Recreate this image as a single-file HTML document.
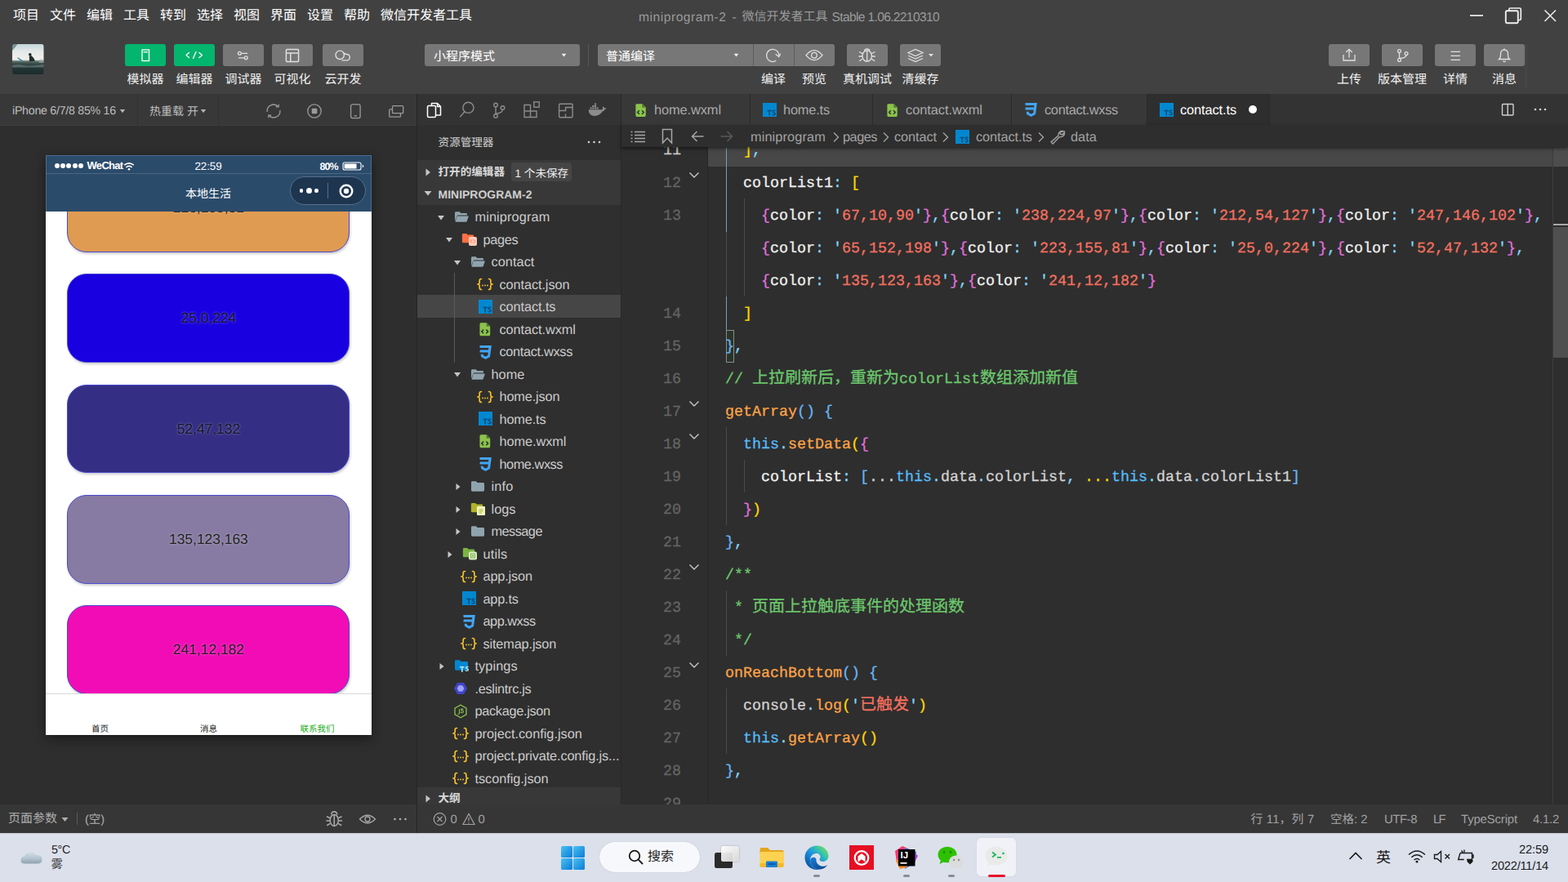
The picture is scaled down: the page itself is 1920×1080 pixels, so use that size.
<!DOCTYPE html><html><head><meta charset="utf-8"><title>miniprogram-2</title><style>html,body{margin:0;padding:0}body{width:1920px;height:1080px;overflow:hidden;position:relative;background:#2e2e2e;font-family:"Liberation Sans",sans-serif;text-rendering:geometricPrecision;-webkit-font-smoothing:antialiased}div{box-sizing:border-box}svg{display:inline-block}.cj{display:block;white-space:nowrap;font-family:"Liberation Sans","Noto Sans CJK SC",sans-serif}.ci{font-family:"Liberation Sans","Noto Sans CJK SC",sans-serif}.cm{font-family:"Liberation Mono","Noto Sans CJK SC",monospace;font-size:20px}</style></head><body><div style="position:absolute;left:0px;top:0px;width:1920px;height:115px;background:#414141;"></div><div style="position:absolute;left:16.00px;top:11.92px;height:16.00px;line-height:0;font-size:0;white-space:nowrap"><span class="cj" style="font-size:16px;line-height:16px;color:#ffffff">项目</span></div><div style="position:absolute;left:61.00px;top:11.92px;height:16.00px;line-height:0;font-size:0;white-space:nowrap"><span class="cj" style="font-size:16px;line-height:16px;color:#ffffff">文件</span></div><div style="position:absolute;left:106.00px;top:11.92px;height:16.00px;line-height:0;font-size:0;white-space:nowrap"><span class="cj" style="font-size:16px;line-height:16px;color:#ffffff">编辑</span></div><div style="position:absolute;left:151.00px;top:11.92px;height:16.00px;line-height:0;font-size:0;white-space:nowrap"><span class="cj" style="font-size:16px;line-height:16px;color:#ffffff">工具</span></div><div style="position:absolute;left:196.00px;top:11.92px;height:16.00px;line-height:0;font-size:0;white-space:nowrap"><span class="cj" style="font-size:16px;line-height:16px;color:#ffffff">转到</span></div><div style="position:absolute;left:241.00px;top:11.92px;height:16.00px;line-height:0;font-size:0;white-space:nowrap"><span class="cj" style="font-size:16px;line-height:16px;color:#ffffff">选择</span></div><div style="position:absolute;left:286.00px;top:11.92px;height:16.00px;line-height:0;font-size:0;white-space:nowrap"><span class="cj" style="font-size:16px;line-height:16px;color:#ffffff">视图</span></div><div style="position:absolute;left:331.00px;top:11.92px;height:16.00px;line-height:0;font-size:0;white-space:nowrap"><span class="cj" style="font-size:16px;line-height:16px;color:#ffffff">界面</span></div><div style="position:absolute;left:376.00px;top:11.92px;height:16.00px;line-height:0;font-size:0;white-space:nowrap"><span class="cj" style="font-size:16px;line-height:16px;color:#ffffff">设置</span></div><div style="position:absolute;left:421.00px;top:11.92px;height:16.00px;line-height:0;font-size:0;white-space:nowrap"><span class="cj" style="font-size:16px;line-height:16px;color:#ffffff">帮助</span></div><div style="position:absolute;left:466.00px;top:11.92px;height:16.00px;line-height:0;font-size:0;white-space:nowrap"><span class="cj" style="font-size:16px;line-height:16px;color:#ffffff">微信开发者工具</span></div><div style="position:absolute;left:782.00px;top:10.59px;height:22px;line-height:22px;font-size:15.60px;color:#9a9a9a;font-family:'Liberation Sans',sans-serif;white-space:pre;letter-spacing:0.533px;">miniprogram-2</div><div style="position:absolute;left:896.50px;top:10.59px;height:22px;line-height:22px;font-size:15.60px;color:#9a9a9a;font-family:'Liberation Sans',sans-serif;white-space:pre;">-</div><div style="position:absolute;left:908.50px;top:13.10px;height:15.00px;line-height:0;font-size:0;white-space:nowrap"><span class="cj" style="font-size:15px;line-height:15px;color:#9a9a9a">微信开发者工具</span></div><div style="position:absolute;left:1018.50px;top:10.59px;height:22px;line-height:22px;font-size:15.60px;color:#9a9a9a;font-family:'Liberation Sans',sans-serif;white-space:pre;letter-spacing:-0.658px;">Stable 1.06.2210310</div><svg style="position:absolute;left:1790px;top:0px;" width="130" height="40" viewBox="0 0 130 40"><g stroke="#f0f0f0" stroke-width="1.7" fill="none"><path d="M10 19h16"/><rect x="53.8" y="13.300" width="15" height="15" rx="1.500" stroke-width="1.900"/><path d="M57.800 13v-1.500q0-1.500 1.500-1.500h11.500q1.500 0 1.500 1.500v11.500q0 1.500-1.500 1.500h-1.500" stroke-width="1.700"/><path d="M101.500 12.500l13.500 13.500M115 12.500l-13.500 13.500" stroke-width="1.500"/></g></svg><svg style="position:absolute;left:15px;top:54px;border-radius:3.500px" width="38.500" height="37" viewBox="0 0 38.500 37"><defs><linearGradient id="avg" x1="0" y1="0" x2="0" y2="1"><stop offset="0" stop-color="#c3d6d9"/><stop offset=".25" stop-color="#e4e9e8"/><stop offset=".52" stop-color="#f3efea"/><stop offset=".56" stop-color="#6d7d7a"/><stop offset=".62" stop-color="#41524f"/><stop offset=".74" stop-color="#26373a"/><stop offset="1" stop-color="#1b2b28"/></linearGradient></defs><rect width="38.500" height="37" fill="url(#avg)"/><path d="M0 0h6.500q-3 4-6.500 8z" fill="#5d7d80" opacity=".8"/><path d="M0 26q8-1.500 14 0t24.500-1v3.500h-38.500z" fill="#7e908d" opacity=".55"/><path d="M6 17l1-.8 6.500 4.300-1.500 1z" fill="#2f8f9f"/><circle cx="21.800" cy="12.800" r="1.800" fill="#1d2a2a"/><path d="M20.800 14.500l2.500-.5q3.200 2.300 4.700 6.800l-7 .500z" fill="#1f2d2d"/><path d="M33 19.500q2-2 4-.5l1.500 1v3h-6z" fill="#9fb0ae" opacity=".6"/></svg><div style="position:absolute;left:153px;top:54px;width:50px;height:27px;background:#04b56e;border-radius:3px;"></div><svg style="position:absolute;left:153px;top:54px;" width="50" height="27" viewBox="0 0 50 27"><rect x="21" y="7" width="8.5" height="13.5" stroke="#ffffff" fill="none" stroke-width="1.3"/><path d="M22.5 9.8h5.5" stroke="#ffffff" fill="none" stroke-width="1.3"/></svg><div style="position:absolute;left:213px;top:54px;width:50px;height:27px;background:#04b56e;border-radius:3px;"></div><svg style="position:absolute;left:213px;top:54px;" width="50" height="27" viewBox="0 0 50 27"><path d="M18.5 10.5l-3.5 3 3.5 3M31 10.5l3.5 3-3.5 3M27 9.5l-3.5 8" stroke="#ffffff" fill="none" stroke-width="1.3" stroke-linecap="round" stroke-linejoin="round"/></svg><div style="position:absolute;left:273px;top:54px;width:50px;height:27px;background:#777777;border-radius:3px;"></div><svg style="position:absolute;left:273px;top:54px;" width="50" height="27" viewBox="0 0 50 27"><g stroke="#e0e0e0" fill="none" stroke-width="1.3"><circle cx="20.400" cy="11.300" r="1.900"/><path d="M22.500 11.300h7.500M19 16.800h7.300"/><circle cx="28.300" cy="16.800" r="1.900"/></g></svg><div style="position:absolute;left:333px;top:54px;width:50px;height:27px;background:#777777;border-radius:3px;"></div><svg style="position:absolute;left:333px;top:54px;" width="50" height="27" viewBox="0 0 50 27"><g stroke="#e0e0e0" fill="none" stroke-width="1.3"><rect x="17.400" y="6.600" width="15.200" height="14.900" rx="1.200" stroke-width="1.500"/><path d="M17.400 11h15.200M22.750 11v10.500" stroke-width="1.500"/></g></svg><div style="position:absolute;left:395px;top:54px;width:50px;height:27px;background:#777777;border-radius:3px;"></div><svg style="position:absolute;left:395px;top:54px;" width="50" height="27" viewBox="0 0 50 27"><g stroke="#e0e0e0" fill="none" stroke-width="1.3"><circle cx="21.200" cy="13.300" r="5.200" stroke-width="1.400"/><path d="M25.300 10.600Q27.500 12.500 29.600 12.500A3.700 3.700 0 0 1 29.600 19.900L23.500 19.900" stroke-width="1.400"/></g></svg><div style="position:absolute;left:155.50px;top:89.80px;height:15.00px;line-height:0;font-size:0;white-space:nowrap"><span class="cj" style="font-size:15px;line-height:15px;color:#f0f0f0">模拟器</span></div><div style="position:absolute;left:215.50px;top:89.80px;height:15.00px;line-height:0;font-size:0;white-space:nowrap"><span class="cj" style="font-size:15px;line-height:15px;color:#f0f0f0">编辑器</span></div><div style="position:absolute;left:275.50px;top:89.80px;height:15.00px;line-height:0;font-size:0;white-space:nowrap"><span class="cj" style="font-size:15px;line-height:15px;color:#f0f0f0">调试器</span></div><div style="position:absolute;left:335.50px;top:89.80px;height:15.00px;line-height:0;font-size:0;white-space:nowrap"><span class="cj" style="font-size:15px;line-height:15px;color:#f0f0f0">可视化</span></div><div style="position:absolute;left:397.50px;top:89.80px;height:15.00px;line-height:0;font-size:0;white-space:nowrap"><span class="cj" style="font-size:15px;line-height:15px;color:#f0f0f0">云开发</span></div><div style="position:absolute;left:520px;top:54px;width:190px;height:27px;background:#777777;border-radius:3px;"></div><div style="position:absolute;left:531.00px;top:61.50px;height:15.00px;line-height:0;font-size:0;white-space:nowrap"><span class="cj" style="font-size:15px;line-height:15px;color:#ffffff">小程序模式</span></div><svg style="position:absolute;left:685px;top:64px;" width="10" height="8" viewBox="0 0 10 8"><path d="M2.700 1.800h5.600l-2.800 3.700z" fill="#f0f0f0"/></svg><div style="position:absolute;left:720px;top:54px;width:1px;height:27px;background:#565656;"></div><div style="position:absolute;left:732px;top:54px;width:290px;height:27px;background:#777777;border-radius:3px;"></div><div style="position:absolute;left:742.00px;top:61.50px;height:15.00px;line-height:0;font-size:0;white-space:nowrap"><span class="cj" style="font-size:15px;line-height:15px;color:#ffffff">普通编译</span></div><svg style="position:absolute;left:896px;top:64px;" width="10" height="8" viewBox="0 0 10 8"><path d="M2.700 1.800h5.600l-2.800 3.700z" fill="#f0f0f0"/></svg><div style="position:absolute;left:922px;top:54px;width:1px;height:27px;background:#5c5c5c;"></div><div style="position:absolute;left:972px;top:54px;width:1px;height:27px;background:#5c5c5c;"></div><svg style="position:absolute;left:922px;top:54px;" width="50" height="27" viewBox="0 0 50 27"><g stroke="#e0e0e0" fill="none" stroke-width="1.3" stroke-width="1.4"><path d="M28.300 20.300A7.600 7.600 0 1 1 31.700 15"/><path d="M27.700 12.300l4 3.300 2.100-4" fill="none"/></g></svg><svg style="position:absolute;left:972px;top:54px;" width="50" height="27" viewBox="0 0 50 27"><g stroke="#e0e0e0" fill="none" stroke-width="1.3"><path d="M15 13.700q10-12 20 0q-10 12-20 0z"/><circle cx="25" cy="13.700" r="3.300"/></g></svg><div style="position:absolute;left:1037px;top:54px;width:50px;height:27px;background:#777777;border-radius:3px;"></div><svg style="position:absolute;left:1037px;top:54px;" width="50" height="27" viewBox="0 0 50 27"><g stroke="#e0e0e0" fill="none" stroke-width="1.3"><ellipse cx="24.700" cy="14.500" rx="5.700" ry="6.700"/><path d="M24.700 8v13M21.500 8.300q.5-2.300 3.200-2.300t3.200 2.300M19.300 11.800l-4.300-2.300M19 15h-4.500M19.400 18l-4.200 2.800M30.100 11.800l4.300-2.300M30.400 15h4.500M30 18l4.200 2.800"/></g></svg><div style="position:absolute;left:1102px;top:54px;width:50px;height:27px;background:#777777;border-radius:3px;"></div><svg style="position:absolute;left:1102px;top:54px;" width="50" height="27" viewBox="0 0 50 27"><g stroke="#e0e0e0" fill="none" stroke-width="1.3"><path d="M10 10.500l9-4 9 4-9 4z"/><path d="M10 14l9 4 9-4M10 17.500l9 4 9-4"/></g><path d="M35 12h6l-3 3.200z" fill="#e6e6e6"/></svg><div style="position:absolute;left:932.00px;top:89.80px;height:15.00px;line-height:0;font-size:0;white-space:nowrap"><span class="cj" style="font-size:15px;line-height:15px;color:#f0f0f0">编译</span></div><div style="position:absolute;left:982.00px;top:89.80px;height:15.00px;line-height:0;font-size:0;white-space:nowrap"><span class="cj" style="font-size:15px;line-height:15px;color:#f0f0f0">预览</span></div><div style="position:absolute;left:1032.00px;top:89.80px;height:15.00px;line-height:0;font-size:0;white-space:nowrap"><span class="cj" style="font-size:15px;line-height:15px;color:#f0f0f0">真机调试</span></div><div style="position:absolute;left:1104.50px;top:89.80px;height:15.00px;line-height:0;font-size:0;white-space:nowrap"><span class="cj" style="font-size:15px;line-height:15px;color:#f0f0f0">清缓存</span></div><div style="position:absolute;left:1627px;top:54px;width:50px;height:27px;background:#777777;border-radius:3px;"></div><svg style="position:absolute;left:1627px;top:54px;" width="50" height="27" viewBox="0 0 50 27"><g stroke="#e0e0e0" fill="none" stroke-width="1.3"><path d="M18 13v7h14v-7M25 16.500V6.500M21.300 10l3.700-3.700 3.700 3.700"/></g></svg><div style="position:absolute;left:1692px;top:54px;width:50px;height:27px;background:#777777;border-radius:3px;"></div><svg style="position:absolute;left:1692px;top:54px;" width="50" height="27" viewBox="0 0 50 27"><g stroke="#e0e0e0" fill="none" stroke-width="1.3"><circle cx="21.5" cy="8.5" r="1.9"/><circle cx="21.5" cy="19.5" r="1.9"/><circle cx="30" cy="11.5" r="1.9"/><path d="M21.5 10.4v7.2M30 13.4q0 3.6-8.5 4"/></g></svg><div style="position:absolute;left:1757px;top:54px;width:50px;height:27px;background:#777777;border-radius:3px;"></div><svg style="position:absolute;left:1757px;top:54px;" width="50" height="27" viewBox="0 0 50 27"><g stroke="#e0e0e0" fill="none" stroke-width="1.3" stroke-width="1.5"><path d="M19.500 9.300h11.500M19.500 14.300h11.500M19.500 19.300h11.500"/></g></svg><div style="position:absolute;left:1817px;top:54px;width:50px;height:27px;background:#777777;border-radius:3px;"></div><svg style="position:absolute;left:1817px;top:54px;" width="50" height="27" viewBox="0 0 50 27"><g stroke="#e0e0e0" fill="none" stroke-width="1.3"><path d="M18.5 18.5h13q-2-1.5-2-4.500v-2.500a4.5 4.5 0 0 0-9 0v2.500q0 3-2 4.500zM23.5 20.5a1.6 1.6 0 0 0 3 0M25 7V5.600"/></g></svg><div style="position:absolute;left:1867px;top:54px;width:3px;height:54px;background:#464646;"></div><div style="position:absolute;left:1637.00px;top:89.80px;height:15.00px;line-height:0;font-size:0;white-space:nowrap"><span class="cj" style="font-size:15px;line-height:15px;color:#f0f0f0">上传</span></div><div style="position:absolute;left:1687.00px;top:89.80px;height:15.00px;line-height:0;font-size:0;white-space:nowrap"><span class="cj" style="font-size:15px;line-height:15px;color:#f0f0f0">版本管理</span></div><div style="position:absolute;left:1767.00px;top:89.80px;height:15.00px;line-height:0;font-size:0;white-space:nowrap"><span class="cj" style="font-size:15px;line-height:15px;color:#f0f0f0">详情</span></div><div style="position:absolute;left:1827.00px;top:89.80px;height:15.00px;line-height:0;font-size:0;white-space:nowrap"><span class="cj" style="font-size:15px;line-height:15px;color:#f0f0f0">消息</span></div><div style="position:absolute;left:0px;top:115px;width:510px;height:39px;background:#383838;"></div><div style="position:absolute;left:0px;top:153px;width:510px;height:1px;background:#3d3d3d;"></div><div style="position:absolute;left:168px;top:115px;width:1px;height:39px;background:#323232;"></div><div style="position:absolute;left:267px;top:115px;width:1px;height:39px;background:#323232;"></div><div style="position:absolute;left:15.00px;top:126.08px;height:20px;line-height:20px;font-size:14.20px;color:#bdbdbd;font-family:'Liberation Sans',sans-serif;white-space:pre;letter-spacing:-0.255px;">iPhone 6/7/8 85% 16</div><svg style="position:absolute;left:145.5px;top:133px;" width="8" height="6" viewBox="0 0 8 6"><path d="M0.800 1h6.400l-3.200 4.300z" fill="#b4b4b4"/></svg><div style="position:absolute;left:183.00px;top:126.15px;height:20px;line-height:20px;font-size:14.00px;color:#bdbdbd;font-family:'Liberation Sans',sans-serif;white-space:pre;"><span class="ci">热重载 开</span></div><svg style="position:absolute;left:245px;top:133px;" width="8" height="6" viewBox="0 0 8 6"><path d="M0.800 1h6.400l-3.200 4.300z" fill="#b4b4b4"/></svg><svg style="position:absolute;left:324.8px;top:126.1px;" width="20" height="20" viewBox="0 0 20 20"><g stroke="#9a9a9a" fill="none" stroke-width="1.3"><path d="M2.200 11a7.800 7.800 0 0 1 13.600-6.200M17.800 9a7.800 7.800 0 0 1-13.600 6.200"/><path d="M16.300 1.800l-.300 3.300-3.200-.500M3.700 18.200l.300-3.300 3.200.500"/></g></svg><svg style="position:absolute;left:375.1px;top:126.1px;" width="20" height="20" viewBox="0 0 20 20"><g stroke="#9a9a9a" fill="none" stroke-width="1.3"><circle cx="10" cy="10" r="8.200"/></g><rect x="6.700" y="6.700" width="6.600" height="6.600" rx="1" fill="#9a9a9a"/></svg><svg style="position:absolute;left:425px;top:126px;" width="20" height="20" viewBox="0 0 20 20"><g stroke="#9a9a9a" fill="none" stroke-width="1.3"><rect x="4.600" y="1.800" width="11.500" height="16.800" rx="2"/><path d="M8.500 16h3.700"/></g></svg><svg style="position:absolute;left:474px;top:126px;" width="22" height="20" viewBox="0 0 22 20"><g stroke="#9a9a9a" fill="none" stroke-width="1.3"><rect x="6.500" y="3.600" width="13.200" height="9" rx="1.200"/><path d="M6.500 7.800h-2.600q-1.200 0-1.200 1.200v7q0 1.200 1.200 1.200h11.400q1.200 0 1.200-1.200v-3.400"/></g></svg><div style="position:absolute;left:510px;top:115px;width:1px;height:905px;background:#252525;"></div><div style="position:absolute;left:511px;top:115px;width:249px;height:38px;background:#333333;"></div><svg style="position:absolute;left:519.5px;top:123.7px;" width="24" height="24" viewBox="0 0 24 24"><g stroke="#ffffff" fill="none" stroke-width="1.5" stroke-linejoin="round"><path d="M8.500 5.500v-3h7l4 4v10.500h-6"/><path d="M15.500 2.500v4h4"/><rect x="3.500" y="5.500" width="10" height="14" rx="1.500"/></g></svg><svg style="position:absolute;left:559px;top:122px;" width="24" height="24" viewBox="0 0 24 24"><g stroke="#8c8c8c" fill="none" stroke-width="1.400"><circle cx="14.400" cy="9.800" r="6.600"/><path d="M10 14.800L4.200 21.300"/></g></svg><svg style="position:absolute;left:599.3px;top:122.7px;" width="24" height="24" viewBox="0 0 24 24"><g stroke="#8c8c8c" fill="none" stroke-width="1.400"><circle cx="8" cy="5.500" r="2.300"/><circle cx="8" cy="19" r="2.300"/><circle cx="16.500" cy="9" r="2.300"/><path d="M8 7.800v8.900M16.500 11.300q0 4-8.500 5"/></g></svg><svg style="position:absolute;left:639px;top:122px;" width="24" height="24" viewBox="0 0 24 24"><g stroke="#8c8c8c" fill="none" stroke-width="1.400"><path d="M3 6.500h7.500v7.500h7.500v7.500h-15zM3 14h7.500v7.500"/><rect x="14.800" y="2.800" width="6.400" height="6.400"/></g></svg><svg style="position:absolute;left:679px;top:122px;" width="24" height="24" viewBox="0 0 24 24"><g stroke="#8c8c8c" fill="none" stroke-width="1.400"><rect x="5.600" y="5.200" width="16.500" height="16.500" rx="1.200"/><path d="M5.600 13.500h8v-4h8.500M13.500 21.700v-4.200"/></g></svg><svg style="position:absolute;left:718.3px;top:123.5px;" width="26" height="24" viewBox="0 0 26 24"><path d="M2 12.500h17.500q2.500-.3 3-2.500q1.800-.2 2.300-1.200q-1.300-.9-2.600-.300q-.4-1.700-1.700-2.300q-1.200 1.600-.300 3.400q-.8.700-2 .700h-15.500q-.2 4.500 3.400 6.700q3 1.500 6.800.600q4.700-1.400 6.600-5.100z" fill="#8c8c8c"/><g fill="#8c8c8c"><rect x="4.500" y="7.500" width="2.200" height="2"/><rect x="7.200" y="7.500" width="2.200" height="2"/><rect x="9.900" y="7.500" width="2.200" height="2"/><rect x="12.600" y="7.500" width="2.200" height="2"/><rect x="7.200" y="5" width="2.200" height="2"/><rect x="9.900" y="5" width="2.200" height="2"/><rect x="9.900" y="2.500" width="2.200" height="2"/></g></svg><div style="position:absolute;left:760px;top:115px;width:1px;height:870px;background:#282828;"></div><div style="position:absolute;left:761px;top:115px;width:1159px;height:38px;background:#333333;"></div><div style="position:absolute;left:761px;top:115px;width:157px;height:38px;background:#383838;"></div><div style="position:absolute;left:918px;top:115px;width:150px;height:38px;background:#383838;"></div><div style="position:absolute;left:1068px;top:115px;width:170px;height:38px;background:#383838;"></div><div style="position:absolute;left:1238px;top:115px;width:166px;height:38px;background:#383838;"></div><div style="position:absolute;left:918px;top:115px;width:1px;height:38px;background:#2a2a2a;"></div><div style="position:absolute;left:1068px;top:115px;width:1px;height:38px;background:#2a2a2a;"></div><div style="position:absolute;left:1238px;top:115px;width:1px;height:38px;background:#2a2a2a;"></div><div style="position:absolute;left:1404px;top:115px;width:1px;height:38px;background:#2a2a2a;"></div><div style="position:absolute;left:1405px;top:115px;width:149px;height:38px;background:#2e2e2e;"></div><div style="position:absolute;left:1554px;top:115px;width:1px;height:38px;background:#2a2a2a;"></div><div style="position:absolute;left:1404px;top:115px;width:1px;height:38px;background:#2a2a2a;"></div><svg style="position:absolute;left:774.5px;top:125.5px;" width="18" height="18" viewBox="0 0 16 16"><path d="M3 2.300q0-1.300 1.300-1.300h6l3.700 3.700v9q0 1.300-1.300 1.300h-8.400q-1.300 0-1.300-1.300z" fill="#8bc34a"/><path d="M10 1v3.300q0 .700.700.700h3.300z" fill="#2e2e2e" opacity=".55"/><path d="M7 8.300l-2 2 2 2M9.800 8.300l2 2-2 2" stroke="#263238" stroke-width="1.300" fill="none"/></svg><div style="position:absolute;left:801.00px;top:123.82px;height:23px;line-height:23px;font-size:16.40px;color:#a9a9a9;font-family:'Liberation Sans',sans-serif;white-space:pre;letter-spacing:-0.103px;">home.wxml</div><svg style="position:absolute;left:934px;top:125.8px;" width="17" height="17" viewBox="0 0 16 16"><rect x="0" y="0" width="16" height="16" fill="#0288d1"/><path d="M5.200 8.300h5v1.300h-1.800v5.200h-1.400v-5.200h-1.800z" fill="#0a4d78"/><path d="M14.600 9.700q-.700-.500-1.500-.500t-.8.500q0 .400 1.100.900q1.600.700 1.600 2.100q0 2-2.300 2q-1.200 0-2-.600v-1.400q.9.700 1.900.700q.9 0 .9-.600q0-.500-1.200-1q-1.500-.700-1.500-2q0-1.800 2.200-1.800q1 0 1.600.300z" fill="#0a4d78"/></svg><div style="position:absolute;left:959.00px;top:123.82px;height:23px;line-height:23px;font-size:16.40px;color:#a9a9a9;font-family:'Liberation Sans',sans-serif;white-space:pre;letter-spacing:-0.191px;">home.ts</div><svg style="position:absolute;left:1082.5px;top:125.5px;" width="18" height="18" viewBox="0 0 16 16"><path d="M3 2.300q0-1.300 1.300-1.300h6l3.700 3.700v9q0 1.300-1.300 1.300h-8.400q-1.300 0-1.300-1.300z" fill="#8bc34a"/><path d="M10 1v3.300q0 .700.700.700h3.300z" fill="#2e2e2e" opacity=".55"/><path d="M7 8.300l-2 2 2 2M9.800 8.300l2 2-2 2" stroke="#263238" stroke-width="1.300" fill="none"/></svg><div style="position:absolute;left:1109.00px;top:123.82px;height:23px;line-height:23px;font-size:16.40px;color:#a9a9a9;font-family:'Liberation Sans',sans-serif;white-space:pre;letter-spacing:-0.065px;">contact.wxml</div><svg style="position:absolute;left:1252px;top:125px;" width="19" height="19" viewBox="0 0 17 17"><path d="M3 1h13l-1.700 12.500-4.800 2.500-4.900-2.500-.4-3h2.700l.2 1.300 2.400 1.100 2.400-1.100.4-3.300h-9.300l.4-2.600h9.200l.2-2.300h-9.500z" fill="#42a5f5"/></svg><div style="position:absolute;left:1279.00px;top:123.82px;height:23px;line-height:23px;font-size:16.40px;color:#a9a9a9;font-family:'Liberation Sans',sans-serif;white-space:pre;letter-spacing:-0.323px;">contact.wxss</div><svg style="position:absolute;left:1420px;top:125.8px;" width="17" height="17" viewBox="0 0 16 16"><rect x="0" y="0" width="16" height="16" fill="#0288d1"/><path d="M5.200 8.300h5v1.300h-1.800v5.200h-1.400v-5.200h-1.800z" fill="#0a4d78"/><path d="M14.600 9.700q-.700-.500-1.500-.500t-.8.500q0 .400 1.100.900q1.600.700 1.600 2.100q0 2-2.300 2q-1.200 0-2-.600v-1.400q.9.700 1.900.700q.9 0 .9-.600q0-.500-1.200-1q-1.500-.700-1.500-2q0-1.800 2.200-1.800q1 0 1.600.300z" fill="#0a4d78"/></svg><div style="position:absolute;left:1445.00px;top:123.82px;height:23px;line-height:23px;font-size:16.40px;color:#ffffff;font-family:'Liberation Sans',sans-serif;white-space:pre;letter-spacing:-0.119px;">contact.ts</div><div style="position:absolute;left:1528.5px;top:129px;width:10px;height:10px;background:#ffffff;border-radius:50%;"></div><svg style="position:absolute;left:1836px;top:124px;" width="20" height="20" viewBox="0 0 20 20"><g stroke="#d0d0d0" stroke-width="1.400" fill="none"><rect x="3.500" y="3.500" width="13.500" height="13.500" rx="1"/><path d="M10.200 3.500v13.500"/></g></svg><svg style="position:absolute;left:1876px;top:124px;" width="20" height="20" viewBox="0 0 20 20"><g fill="#d0d0d0"><circle cx="4" cy="10" r="1.300"/><circle cx="10" cy="10" r="1.300"/><circle cx="16" cy="10" r="1.300"/></g></svg><div style="position:absolute;left:56px;top:190.4px;width:399px;height:709.6px;background:#ffffff;box-shadow:0 4px 14px rgba(0,0,0,.45);"></div><div style="position:absolute;left:56px;top:258.500px;width:399px;height:591px;overflow:hidden;background:#fff"><div style="position:absolute;left:26.400px;top:-58.35px;width:346px;height:108.7px;border-radius:24px;background:#df9b51;border:1px solid #4a4ad0;box-shadow:1px 2px 3px rgba(0,0,0,.2);font-size:17.4px;line-height:107.4px;text-align:center;color:#2a2a2a;text-shadow:0 0 3px rgba(255,255,255,.45)">223,155,81</div><div style="position:absolute;left:26.400px;top:76.90px;width:346px;height:108.7px;border-radius:24px;background:#1900e0;border:1px solid #4a4ad0;box-shadow:1px 2px 3px rgba(0,0,0,.2);font-size:17.4px;line-height:107.4px;text-align:center;color:#12122a;text-shadow:0 0 3px rgba(255,255,255,.45)">25,0,224</div><div style="position:absolute;left:26.400px;top:212.15px;width:346px;height:108.7px;border-radius:24px;background:#342f84;border:1px solid #4a4ad0;box-shadow:1px 2px 3px rgba(0,0,0,.2);font-size:17.4px;line-height:107.4px;text-align:center;color:#15152a;text-shadow:0 0 3px rgba(255,255,255,.45)">52,47,132</div><div style="position:absolute;left:26.400px;top:347.40px;width:346px;height:108.7px;border-radius:24px;background:#877ba3;border:1px solid #4a4ad0;box-shadow:1px 2px 3px rgba(0,0,0,.2);font-size:17.4px;line-height:107.4px;text-align:center;color:#222222;text-shadow:0 0 3px rgba(255,255,255,.45)">135,123,163</div><div style="position:absolute;left:26.400px;top:482.65px;width:346px;height:108.7px;border-radius:24px;background:#f10cb6;border:1px solid #4a4ad0;box-shadow:1px 2px 3px rgba(0,0,0,.2);font-size:17.4px;line-height:107.4px;text-align:center;color:#2a1a26;text-shadow:0 0 3px rgba(255,255,255,.45)">241,12,182</div></div><div style="position:absolute;left:56px;top:190.4px;width:399px;height:68.2px;background:#2b4b6b;"></div><div style="position:absolute;left:56px;top:212.2px;width:399px;height:1px;background:#4a6785;"></div><div style="position:absolute;left:56px;top:190.4px;width:399px;height:68.2px;border:1px solid rgba(140,170,200,.35);border-bottom:none"></div><div style="position:absolute;left:67px;top:200.3px;width:6px;height:6px;background:#ffffff;border-radius:50%;"></div><div style="position:absolute;left:74.2px;top:200.3px;width:6px;height:6px;background:#ffffff;border-radius:50%;"></div><div style="position:absolute;left:81.4px;top:200.3px;width:6px;height:6px;background:#ffffff;border-radius:50%;"></div><div style="position:absolute;left:88.6px;top:200.3px;width:6px;height:6px;background:#ffffff;border-radius:50%;"></div><div style="position:absolute;left:95.8px;top:200.3px;width:6px;height:6px;background:#ffffff;border-radius:50%;"></div><div style="position:absolute;left:106.50px;top:194.20px;height:18px;line-height:18px;font-size:13.00px;color:#ffffff;font-family:'Liberation Sans',sans-serif;white-space:pre;font-weight:bold;letter-spacing:-0.692px;">WeChat</div><svg style="position:absolute;left:150.5px;top:197.5px;" width="14" height="11" viewBox="0 0 14 11"><g fill="none" stroke="#fff" stroke-width="1.700"><path d="M1.200 4.200q5.800-4.600 11.600 0M3.400 6.800q3.600-2.800 7.200 0"/></g><circle cx="7" cy="9.200" r="1.300" fill="#fff"/></svg><div style="position:absolute;left:238.50px;top:193.76px;height:19px;line-height:19px;font-size:13.40px;color:#ffffff;font-family:'Liberation Sans',sans-serif;white-space:pre;letter-spacing:-0.107px;">22:59</div><div style="position:absolute;left:391.50px;top:194.87px;height:18px;line-height:18px;font-size:12.50px;color:#ffffff;font-family:'Liberation Sans',sans-serif;white-space:pre;font-weight:bold;letter-spacing:-1.006px;">80%</div><svg style="position:absolute;left:419px;top:197.7px;" width="30" height="11" viewBox="0 0 30 11"><rect x="1" y="1" width="22" height="9" rx="2" fill="none" stroke="#fff" stroke-width="1.100"/><rect x="2.600" y="2.600" width="15" height="5.800" rx="1" fill="#fff"/><path d="M24.800 3.800q1.500.3 1.500 1.700t-1.500 1.700z" fill="#fff"/></svg><div style="position:absolute;left:227.00px;top:230.08px;height:14.00px;line-height:0;font-size:0;white-space:nowrap"><span class="cj" style="font-size:14px;line-height:14px;color:#ffffff">本地生活</span></div><div style="position:absolute;left:354.500px;top:216.200px;width:93px;height:34.500px;border-radius:18px;background:#1e3550;border:1px solid #56708c"></div><div style="position:absolute;left:400.5px;top:224px;width:1px;height:19px;background:#56708c;"></div><div style="position:absolute;left:367.1px;top:231.2px;width:4.4px;height:4.4px;background:#fff;border-radius:50%;"></div><div style="position:absolute;left:374.9px;top:229.6px;width:7.6px;height:7.6px;background:#fff;border-radius:50%;"></div><div style="position:absolute;left:385.4px;top:231.2px;width:4.4px;height:4.4px;background:#fff;border-radius:50%;"></div><svg style="position:absolute;left:414px;top:224px;" width="20" height="20" viewBox="0 0 20 20"><circle cx="10" cy="10" r="7.300" fill="none" stroke="#fff" stroke-width="2.400"/><circle cx="10" cy="10" r="3.200" fill="#fff"/></svg><div style="position:absolute;left:56px;top:849px;width:399px;height:51px;background:#ffffff;"></div><div style="position:absolute;left:56px;top:849px;width:399px;height:1px;background:#d8d8d8;"></div><div style="position:absolute;left:112.00px;top:888.06px;height:10.50px;line-height:0;font-size:0;white-space:nowrap"><span class="cj" style="font-size:10.5px;line-height:10.5px;color:#1a1a1a">首页</span></div><div style="position:absolute;left:245.00px;top:888.06px;height:10.50px;line-height:0;font-size:0;white-space:nowrap"><span class="cj" style="font-size:10.5px;line-height:10.5px;color:#1a1a1a">消息</span></div><div style="position:absolute;left:367.50px;top:888.06px;height:10.50px;line-height:0;font-size:0;white-space:nowrap"><span class="cj" style="font-size:10.5px;line-height:10.5px;color:#22ac22">联系我们</span></div><div style="position:absolute;left:511px;top:153px;width:249px;height:811px;background:#2f2f2f;"></div><div style="position:absolute;left:536.50px;top:168.03px;height:13.60px;line-height:0;font-size:0;white-space:nowrap"><span class="cj" style="font-size:13.6px;line-height:13.6px;color:#cfcfcf">资源管理器</span></div><svg style="position:absolute;left:718px;top:168px;" width="20" height="12" viewBox="0 0 20 12"><g fill="#d0d0d0"><circle cx="3" cy="6" r="1.300"/><circle cx="9.500" cy="6" r="1.300"/><circle cx="16" cy="6" r="1.300"/></g></svg><div style="position:absolute;left:511px;top:196px;width:249px;height:55px;background:#383838;"></div><svg style="position:absolute;left:519px;top:204.5px;" width="10" height="12" viewBox="0 0 10 12"><path d="M2.500 1.500l5.500 4.500-5.500 4.500z" fill="#c5c5c5"/></svg><div style="position:absolute;left:536.50px;top:203.63px;height:13.60px;line-height:0;font-size:0;white-space:nowrap"><span class="cj" style="font-size:13.6px;line-height:13.6px;color:#d8d8d8;font-weight:bold">打开的编辑器</span></div><div style="position:absolute;left:626px;top:198.5px;width:74px;height:23px;background:#454545;border-radius:3px;"></div><div style="position:absolute;left:630.50px;top:202.69px;height:19px;line-height:19px;font-size:13.60px;color:#f0f0f0;font-family:'Liberation Sans',sans-serif;white-space:pre;">1 <span class="ci">个未保存</span></div><svg style="position:absolute;left:518px;top:232px;" width="12" height="10" viewBox="0 0 12 10"><path d="M1.500 2h9l-4.500 5.500z" fill="#c5c5c5"/></svg><div style="position:absolute;left:536.50px;top:228.68px;height:19px;line-height:19px;font-size:13.90px;color:#cfcfcf;font-family:'Liberation Sans',sans-serif;white-space:pre;font-weight:bold;letter-spacing:0.055px;">MINIPROGRAM-2</div><svg style="position:absolute;left:535px;top:262.7px;" width="10" height="8" viewBox="0 0 10 8"><path d="M1 1h8l-4 5.500z" fill="#c5c5c5"/></svg><svg style="position:absolute;left:555.5px;top:258.2px;" width="18" height="15" viewBox="0 0 18.500 15"><path d="M1 2.500q0-1.500 1.500-1.500h4.200l1.800 1.800h6.500q1.500 0 1.500 1.500v1.200h-11.300q-1.200 0-1.600 1.100l-2.600 6.400z" fill="#90a4ae"/><path d="M4.300 6.500h13.200q1 0 .6 1l-2 5.700q-.3.800-1.200.800h-13.400l2-6.700q.2-.8.800-.8z" fill="#90a4ae"/></svg><div style="position:absolute;left:581.50px;top:255.15px;height:23px;line-height:23px;font-size:16.30px;color:#cccccc;font-family:'Liberation Sans',sans-serif;white-space:pre;letter-spacing:0.129px;">miniprogram</div><svg style="position:absolute;left:545px;top:290.2px;" width="10" height="8" viewBox="0 0 10 8"><path d="M1 1h8l-4 5.500z" fill="#c5c5c5"/></svg><svg style="position:absolute;left:564.5px;top:284.7px;" width="16" height="13.3333" viewBox="0 0 18.500 15"><path d="M1 2.500q0-1.500 1.500-1.500h4.500l1.800 1.800h7.200q1.500 0 1.500 1.500v8.200q0 1.500-1.500 1.500h-13.500q-1.500 0-1.500-1.500z" fill="#ff7043"/></svg><svg style="position:absolute;left:573.5px;top:290.2px;" width="10" height="11" viewBox="0 0 10 11"><rect x="0" y="0" width="10" height="11" rx="2" fill="#ffccbc"/><path d="M4 3.500l-2 2 2 2M6 3.500l2 2-2 2" stroke="#ff7043" stroke-width="1" fill="none"/></svg><div style="position:absolute;left:591.50px;top:282.65px;height:23px;line-height:23px;font-size:16.30px;color:#cccccc;font-family:'Liberation Sans',sans-serif;white-space:pre;letter-spacing:-0.282px;">pages</div><svg style="position:absolute;left:555px;top:317.7px;" width="10" height="8" viewBox="0 0 10 8"><path d="M1 1h8l-4 5.500z" fill="#c5c5c5"/></svg><svg style="position:absolute;left:575.5px;top:313.2px;" width="18" height="15" viewBox="0 0 18.500 15"><path d="M1 2.500q0-1.500 1.500-1.500h4.200l1.800 1.800h6.500q1.500 0 1.500 1.500v1.200h-11.300q-1.200 0-1.600 1.100l-2.600 6.400z" fill="#90a4ae"/><path d="M4.300 6.500h13.200q1 0 .6 1l-2 5.700q-.3.800-1.200.800h-13.400l2-6.700q.2-.8.800-.8z" fill="#90a4ae"/></svg><div style="position:absolute;left:601.50px;top:310.15px;height:23px;line-height:23px;font-size:16.30px;color:#cccccc;font-family:'Liberation Sans',sans-serif;white-space:pre;letter-spacing:0.064px;">contact</div><svg style="position:absolute;left:583.7px;top:340.2px;" width="20" height="16" viewBox="0 0 20 16"><g fill="none" stroke="#f5c12a" stroke-width="1.700" stroke-linecap="round"><path d="M5.500 1.500q-2.300 0-2.300 2v2.300q0 1.700-1.700 2.200q1.700.500 1.700 2.200v2.300q0 2 2.300 2M14.500 1.500q2.300 0 2.300 2v2.300q0 1.700 1.700 2.200q-1.700.500-1.700 2.200v2.300q0 2-2.300 2"/></g><g fill="#f5c12a"><circle cx="7" cy="9.500" r=".9"/><circle cx="10" cy="9.500" r=".9"/><circle cx="13" cy="9.500" r=".9"/></g></svg><div style="position:absolute;left:611.50px;top:337.65px;height:23px;line-height:23px;font-size:16.30px;color:#cccccc;font-family:'Liberation Sans',sans-serif;white-space:pre;letter-spacing:-0.082px;">contact.json</div><div style="position:absolute;left:511px;top:361.4px;width:249px;height:27.5px;background:#464646;"></div><svg style="position:absolute;left:585.6px;top:366.9px;" width="17" height="17" viewBox="0 0 16 16"><rect x="0" y="0" width="16" height="16" fill="#0288d1"/><path d="M5.200 8.300h5v1.300h-1.800v5.200h-1.400v-5.200h-1.800z" fill="#0a4d78"/><path d="M14.600 9.700q-.700-.500-1.500-.500t-.8.500q0 .400 1.100.900q1.600.700 1.600 2.100q0 2-2.300 2q-1.200 0-2-.600v-1.400q.9.700 1.900.700q.9 0 .9-.600q0-.500-1.200-1q-1.500-.700-1.500-2q0-1.800 2.200-1.800q1 0 1.600.300z" fill="#0a4d78"/></svg><div style="position:absolute;left:611.50px;top:365.15px;height:23px;line-height:23px;font-size:16.30px;color:#cccccc;font-family:'Liberation Sans',sans-serif;white-space:pre;letter-spacing:-0.076px;">contact.ts</div><svg style="position:absolute;left:584.3px;top:393.7px;" width="18.5" height="18.5" viewBox="0 0 16 16"><path d="M3 2.300q0-1.300 1.300-1.300h6l3.700 3.700v9q0 1.300-1.300 1.300h-8.400q-1.300 0-1.300-1.300z" fill="#8bc34a"/><path d="M10 1v3.300q0 .700.700.700h3.300z" fill="#2e2e2e" opacity=".55"/><path d="M7 8.300l-2 2 2 2M9.800 8.300l2 2-2 2" stroke="#263238" stroke-width="1.300" fill="none"/></svg><div style="position:absolute;left:611.50px;top:392.65px;height:23px;line-height:23px;font-size:16.30px;color:#cccccc;font-family:'Liberation Sans',sans-serif;white-space:pre;letter-spacing:-0.059px;">contact.wxml</div><svg style="position:absolute;left:584.3px;top:421.7px;" width="19" height="19" viewBox="0 0 17 17"><path d="M3 1h13l-1.700 12.500-4.800 2.500-4.900-2.500-.4-3h2.700l.2 1.300 2.400 1.100 2.400-1.100.4-3.300h-9.300l.4-2.600h9.200l.2-2.300h-9.500z" fill="#42a5f5"/></svg><div style="position:absolute;left:611.50px;top:420.15px;height:23px;line-height:23px;font-size:16.30px;color:#cccccc;font-family:'Liberation Sans',sans-serif;white-space:pre;letter-spacing:-0.309px;">contact.wxss</div><svg style="position:absolute;left:555px;top:455.2px;" width="10" height="8" viewBox="0 0 10 8"><path d="M1 1h8l-4 5.500z" fill="#c5c5c5"/></svg><svg style="position:absolute;left:575.5px;top:450.7px;" width="18" height="15" viewBox="0 0 18.500 15"><path d="M1 2.500q0-1.500 1.500-1.500h4.200l1.800 1.800h6.500q1.500 0 1.500 1.500v1.200h-11.300q-1.200 0-1.600 1.100l-2.600 6.400z" fill="#90a4ae"/><path d="M4.300 6.500h13.200q1 0 .6 1l-2 5.700q-.3.800-1.200.800h-13.400l2-6.700q.2-.8.800-.8z" fill="#90a4ae"/></svg><div style="position:absolute;left:601.50px;top:447.65px;height:23px;line-height:23px;font-size:16.30px;color:#cccccc;font-family:'Liberation Sans',sans-serif;white-space:pre;letter-spacing:0.056px;">home</div><svg style="position:absolute;left:583.7px;top:477.7px;" width="20" height="16" viewBox="0 0 20 16"><g fill="none" stroke="#f5c12a" stroke-width="1.700" stroke-linecap="round"><path d="M5.500 1.500q-2.300 0-2.300 2v2.300q0 1.700-1.700 2.200q1.700.500 1.700 2.200v2.300q0 2 2.300 2M14.500 1.500q2.300 0 2.300 2v2.300q0 1.700 1.700 2.200q-1.700.500-1.700 2.200v2.300q0 2-2.300 2"/></g><g fill="#f5c12a"><circle cx="7" cy="9.500" r=".9"/><circle cx="10" cy="9.500" r=".9"/><circle cx="13" cy="9.500" r=".9"/></g></svg><div style="position:absolute;left:611.50px;top:475.15px;height:23px;line-height:23px;font-size:16.30px;color:#cccccc;font-family:'Liberation Sans',sans-serif;white-space:pre;letter-spacing:-0.134px;">home.json</div><svg style="position:absolute;left:585.6px;top:504.4px;" width="17" height="17" viewBox="0 0 16 16"><rect x="0" y="0" width="16" height="16" fill="#0288d1"/><path d="M5.200 8.300h5v1.300h-1.800v5.200h-1.400v-5.200h-1.800z" fill="#0a4d78"/><path d="M14.600 9.700q-.700-.500-1.500-.500t-.8.500q0 .400 1.100.900q1.600.700 1.600 2.100q0 2-2.300 2q-1.200 0-2-.600v-1.400q.9.700 1.900.700q.9 0 .9-.600q0-.500-1.200-1q-1.500-.700-1.500-2q0-1.800 2.200-1.800q1 0 1.600.300z" fill="#0a4d78"/></svg><div style="position:absolute;left:611.50px;top:502.65px;height:23px;line-height:23px;font-size:16.30px;color:#cccccc;font-family:'Liberation Sans',sans-serif;white-space:pre;letter-spacing:-0.140px;">home.ts</div><svg style="position:absolute;left:584.3px;top:531.2px;" width="18.5" height="18.5" viewBox="0 0 16 16"><path d="M3 2.300q0-1.300 1.300-1.300h6l3.700 3.700v9q0 1.300-1.300 1.300h-8.400q-1.300 0-1.300-1.300z" fill="#8bc34a"/><path d="M10 1v3.300q0 .700.700.700h3.300z" fill="#2e2e2e" opacity=".55"/><path d="M7 8.300l-2 2 2 2M9.800 8.300l2 2-2 2" stroke="#263238" stroke-width="1.300" fill="none"/></svg><div style="position:absolute;left:611.50px;top:530.15px;height:23px;line-height:23px;font-size:16.30px;color:#cccccc;font-family:'Liberation Sans',sans-serif;white-space:pre;letter-spacing:-0.047px;">home.wxml</div><svg style="position:absolute;left:584.3px;top:559.2px;" width="19" height="19" viewBox="0 0 17 17"><path d="M3 1h13l-1.700 12.500-4.800 2.500-4.900-2.500-.4-3h2.700l.2 1.300 2.400 1.100 2.400-1.100.4-3.300h-9.300l.4-2.600h9.200l.2-2.300h-9.500z" fill="#42a5f5"/></svg><div style="position:absolute;left:611.50px;top:557.65px;height:23px;line-height:23px;font-size:16.30px;color:#cccccc;font-family:'Liberation Sans',sans-serif;white-space:pre;letter-spacing:-0.436px;">home.wxss</div><svg style="position:absolute;left:556.5px;top:591.2px;" width="8" height="10" viewBox="0 0 8 10"><path d="M1.500 1l5 4-5 4z" fill="#c5c5c5"/></svg><svg style="position:absolute;left:575.5px;top:588.2px;" width="18" height="15" viewBox="0 0 18.500 15"><path d="M1 2.500q0-1.500 1.500-1.500h4.500l1.800 1.800h7.200q1.500 0 1.500 1.500v8.200q0 1.500-1.500 1.500h-13.500q-1.500 0-1.500-1.500z" fill="#90a4ae"/></svg><div style="position:absolute;left:601.50px;top:585.15px;height:23px;line-height:23px;font-size:16.30px;color:#cccccc;font-family:'Liberation Sans',sans-serif;white-space:pre;letter-spacing:0.180px;">info</div><svg style="position:absolute;left:556.5px;top:618.7px;" width="8" height="10" viewBox="0 0 8 10"><path d="M1.500 1l5 4-5 4z" fill="#c5c5c5"/></svg><svg style="position:absolute;left:575.5px;top:614.7px;" width="16" height="13.3333" viewBox="0 0 18.500 15"><path d="M1 2.500q0-1.500 1.500-1.500h4.500l1.800 1.800h7.200q1.500 0 1.500 1.500v8.200q0 1.500-1.500 1.500h-13.500q-1.500 0-1.500-1.500z" fill="#afb42b"/></svg><svg style="position:absolute;left:583.5px;top:620.2px;" width="10" height="11" viewBox="0 0 10 11"><rect x="0" y="0" width="10" height="11" rx="1" fill="#f0f4c3"/><path d="M2.500 4h5M2.500 6h5M2.500 8h3.500" stroke="#afb42b" stroke-width="1"/></svg><div style="position:absolute;left:601.50px;top:612.65px;height:23px;line-height:23px;font-size:16.30px;color:#cccccc;font-family:'Liberation Sans',sans-serif;white-space:pre;letter-spacing:0.024px;">logs</div><svg style="position:absolute;left:556.5px;top:646.2px;" width="8" height="10" viewBox="0 0 8 10"><path d="M1.500 1l5 4-5 4z" fill="#c5c5c5"/></svg><svg style="position:absolute;left:575.5px;top:643.2px;" width="18" height="15" viewBox="0 0 18.500 15"><path d="M1 2.500q0-1.500 1.500-1.500h4.500l1.800 1.800h7.200q1.500 0 1.500 1.500v8.200q0 1.500-1.500 1.500h-13.500q-1.500 0-1.500-1.500z" fill="#90a4ae"/></svg><div style="position:absolute;left:601.50px;top:640.15px;height:23px;line-height:23px;font-size:16.30px;color:#cccccc;font-family:'Liberation Sans',sans-serif;white-space:pre;letter-spacing:-0.520px;">message</div><svg style="position:absolute;left:546.5px;top:673.7px;" width="8" height="10" viewBox="0 0 8 10"><path d="M1.500 1l5 4-5 4z" fill="#c5c5c5"/></svg><svg style="position:absolute;left:565.5px;top:669.7px;" width="16" height="13.3333" viewBox="0 0 18.500 15"><path d="M1 2.500q0-1.500 1.500-1.500h4.500l1.800 1.800h7.200q1.500 0 1.500 1.500v8.200q0 1.500-1.500 1.500h-13.500q-1.500 0-1.500-1.500z" fill="#7cb342"/></svg><svg style="position:absolute;left:573.5px;top:675.2px;" width="10" height="11" viewBox="0 0 10 11"><rect x="0" y="0.500" width="10" height="10" rx="2" fill="#dcedc8"/><rect x="2.500" y="3" width="5" height="5" fill="none" stroke="#7cb342" stroke-width="1"/><path d="M5 4.200v2.600M3.700 5.500h2.600" stroke="#7cb342" stroke-width="1"/></svg><div style="position:absolute;left:591.50px;top:667.65px;height:23px;line-height:23px;font-size:16.30px;color:#cccccc;font-family:'Liberation Sans',sans-serif;white-space:pre;letter-spacing:0.203px;">utils</div><svg style="position:absolute;left:563.7px;top:697.7px;" width="20" height="16" viewBox="0 0 20 16"><g fill="none" stroke="#f5c12a" stroke-width="1.700" stroke-linecap="round"><path d="M5.500 1.500q-2.300 0-2.300 2v2.300q0 1.700-1.700 2.200q1.700.500 1.700 2.200v2.300q0 2 2.300 2M14.500 1.500q2.300 0 2.300 2v2.300q0 1.700 1.700 2.200q-1.700.500-1.700 2.200v2.300q0 2-2.300 2"/></g><g fill="#f5c12a"><circle cx="7" cy="9.500" r=".9"/><circle cx="10" cy="9.500" r=".9"/><circle cx="13" cy="9.500" r=".9"/></g></svg><div style="position:absolute;left:591.50px;top:695.15px;height:23px;line-height:23px;font-size:16.30px;color:#cccccc;font-family:'Liberation Sans',sans-serif;white-space:pre;letter-spacing:-0.141px;">app.json</div><svg style="position:absolute;left:565.6px;top:724.4px;" width="17" height="17" viewBox="0 0 16 16"><rect x="0" y="0" width="16" height="16" fill="#0288d1"/><path d="M5.200 8.300h5v1.300h-1.800v5.200h-1.400v-5.200h-1.800z" fill="#0a4d78"/><path d="M14.600 9.700q-.700-.500-1.500-.500t-.8.500q0 .400 1.100.900q1.600.700 1.600 2.100q0 2-2.300 2q-1.200 0-2-.600v-1.400q.9.700 1.900.700q.9 0 .9-.600q0-.500-1.200-1q-1.500-.700-1.500-2q0-1.800 2.200-1.800q1 0 1.600.300z" fill="#0a4d78"/></svg><div style="position:absolute;left:591.50px;top:722.65px;height:23px;line-height:23px;font-size:16.30px;color:#cccccc;font-family:'Liberation Sans',sans-serif;white-space:pre;letter-spacing:-0.184px;">app.ts</div><svg style="position:absolute;left:564.3px;top:751.7px;" width="19" height="19" viewBox="0 0 17 17"><path d="M3 1h13l-1.700 12.500-4.800 2.500-4.900-2.500-.4-3h2.700l.2 1.300 2.400 1.100 2.400-1.100.4-3.300h-9.300l.4-2.600h9.200l.2-2.300h-9.500z" fill="#42a5f5"/></svg><div style="position:absolute;left:591.50px;top:750.15px;height:23px;line-height:23px;font-size:16.30px;color:#cccccc;font-family:'Liberation Sans',sans-serif;white-space:pre;letter-spacing:-0.468px;">app.wxss</div><svg style="position:absolute;left:563.7px;top:780.2px;" width="20" height="16" viewBox="0 0 20 16"><g fill="none" stroke="#f5c12a" stroke-width="1.700" stroke-linecap="round"><path d="M5.500 1.500q-2.300 0-2.300 2v2.300q0 1.700-1.700 2.200q1.700.500 1.700 2.200v2.300q0 2 2.300 2M14.500 1.500q2.300 0 2.300 2v2.300q0 1.700 1.700 2.200q-1.700.500-1.700 2.200v2.300q0 2-2.300 2"/></g><g fill="#f5c12a"><circle cx="7" cy="9.500" r=".9"/><circle cx="10" cy="9.500" r=".9"/><circle cx="13" cy="9.500" r=".9"/></g></svg><div style="position:absolute;left:591.50px;top:777.65px;height:23px;line-height:23px;font-size:16.30px;color:#cccccc;font-family:'Liberation Sans',sans-serif;white-space:pre;letter-spacing:-0.142px;">sitemap.json</div><svg style="position:absolute;left:536.5px;top:811.2px;" width="8" height="10" viewBox="0 0 8 10"><path d="M1.500 1l5 4-5 4z" fill="#c5c5c5"/></svg><svg style="position:absolute;left:555.5px;top:807.2px;" width="18" height="15" viewBox="0 0 18.500 15"><path d="M1 2.500q0-1.500 1.500-1.500h4.500l1.800 1.800h7.200q1.500 0 1.500 1.500v8.200q0 1.500-1.500 1.500h-13.500q-1.500 0-1.500-1.500z" fill="#0288d1"/></svg><svg style="position:absolute;left:562.5px;top:814.7px;" width="11" height="9" viewBox="0 0 11 9"><path d="M0 1h5.500v1.500h-1.900v5.500h-1.600v-5.500h-2zM10.600 2.400q-.700-.400-1.500-.400t-.8.500q0 .400 1.100.800q1.600.6 1.600 2q0 1.800-2.300 1.800q-1.200 0-2-.5v-1.400q.9.700 1.900.700q.9 0 .9-.600q0-.400-1.200-.900q-1.500-.6-1.500-1.900q0-1.700 2.200-1.700q1 0 1.600.300z" fill="#b3e5fc"/></svg><div style="position:absolute;left:581.50px;top:805.15px;height:23px;line-height:23px;font-size:16.30px;color:#cccccc;font-family:'Liberation Sans',sans-serif;white-space:pre;letter-spacing:0.093px;">typings</div><svg style="position:absolute;left:555px;top:835.2px;" width="18" height="16" viewBox="0 0 18 16"><path d="M5 1h8l4 7-4 7h-8l-4-7z" fill="#3f45c8"/><path d="M6.800 4.200h4.400l2.200 3.800-2.200 3.800h-4.400l-2.200-3.800z" fill="#9ea1f5"/></svg><div style="position:absolute;left:581.50px;top:832.65px;height:23px;line-height:23px;font-size:16.30px;color:#cccccc;font-family:'Liberation Sans',sans-serif;white-space:pre;letter-spacing:-0.288px;">.eslintrc.js</div><svg style="position:absolute;left:555px;top:861.7px;" width="18" height="18" viewBox="0 0 18 18"><path d="M9 1.200l7 4v7.600l-7 4-7-4v-7.600z" fill="none" stroke="#8bc34a" stroke-width="1.300"/><path d="M7.500 6v5q0 1.300-1.300 1.300h-.7M12.300 6.800q-.6-.7-1.600-.7t-1.200.9q0 .8 1.300 1.100q1.600.3 1.600 1.400q0 1.200-1.700 1.200q-1.200 0-1.800-.8" fill="none" stroke="#8bc34a" stroke-width="1.100"/></svg><div style="position:absolute;left:581.50px;top:860.15px;height:23px;line-height:23px;font-size:16.30px;color:#cccccc;font-family:'Liberation Sans',sans-serif;white-space:pre;letter-spacing:-0.297px;">package.json</div><svg style="position:absolute;left:553.7px;top:890.2px;" width="20" height="16" viewBox="0 0 20 16"><g fill="none" stroke="#f5c12a" stroke-width="1.700" stroke-linecap="round"><path d="M5.500 1.500q-2.300 0-2.300 2v2.300q0 1.700-1.700 2.200q1.700.500 1.700 2.200v2.300q0 2 2.300 2M14.500 1.500q2.300 0 2.300 2v2.300q0 1.700 1.700 2.200q-1.700.500-1.700 2.200v2.300q0 2-2.300 2"/></g><g fill="#f5c12a"><circle cx="7" cy="9.500" r=".9"/><circle cx="10" cy="9.500" r=".9"/><circle cx="13" cy="9.500" r=".9"/></g></svg><div style="position:absolute;left:581.50px;top:887.65px;height:23px;line-height:23px;font-size:16.30px;color:#cccccc;font-family:'Liberation Sans',sans-serif;white-space:pre;letter-spacing:0.006px;">project.config.json</div><svg style="position:absolute;left:553.7px;top:917.7px;" width="20" height="16" viewBox="0 0 20 16"><g fill="none" stroke="#f5c12a" stroke-width="1.700" stroke-linecap="round"><path d="M5.500 1.500q-2.300 0-2.300 2v2.300q0 1.700-1.700 2.200q1.700.500 1.700 2.200v2.300q0 2 2.300 2M14.500 1.500q2.300 0 2.300 2v2.300q0 1.700 1.700 2.200q-1.700.500-1.700 2.200v2.300q0 2-2.300 2"/></g><g fill="#f5c12a"><circle cx="7" cy="9.500" r=".9"/><circle cx="10" cy="9.500" r=".9"/><circle cx="13" cy="9.500" r=".9"/></g></svg><div style="position:absolute;left:581.50px;top:915.15px;height:23px;line-height:23px;font-size:16.30px;color:#cccccc;font-family:'Liberation Sans',sans-serif;white-space:pre;letter-spacing:-0.117px;">project.private.config.js...</div><svg style="position:absolute;left:553.7px;top:945.2px;" width="20" height="16" viewBox="0 0 20 16"><g fill="none" stroke="#f5c12a" stroke-width="1.700" stroke-linecap="round"><path d="M5.500 1.500q-2.300 0-2.300 2v2.300q0 1.700-1.700 2.200q1.700.500 1.700 2.200v2.300q0 2 2.300 2M14.500 1.500q2.300 0 2.300 2v2.300q0 1.700 1.700 2.200q-1.700.500-1.700 2.200v2.300q0 2-2.300 2"/></g><g fill="#f5c12a"><circle cx="7" cy="9.500" r=".9"/><circle cx="10" cy="9.500" r=".9"/><circle cx="13" cy="9.500" r=".9"/></g></svg><div style="position:absolute;left:581.50px;top:942.65px;height:23px;line-height:23px;font-size:16.30px;color:#cccccc;font-family:'Liberation Sans',sans-serif;white-space:pre;letter-spacing:-0.031px;">tsconfig.json</div><div style="position:absolute;left:556px;top:334px;width:1px;height:110px;background:#585858;"></div><div style="position:absolute;left:511px;top:964px;width:249px;height:21px;background:#383838;"></div><svg style="position:absolute;left:519px;top:971.5px;" width="10" height="12" viewBox="0 0 10 12"><path d="M2.500 1.500l5.500 4.500-5.500 4.500z" fill="#c5c5c5"/></svg><div style="position:absolute;left:536.50px;top:970.53px;height:13.60px;line-height:0;font-size:0;white-space:nowrap"><span class="cj" style="font-size:13.6px;line-height:13.6px;color:#d8d8d8;font-weight:bold">大纲</span></div><div style="position:absolute;left:761px;top:153px;width:1159px;height:832px;background:#2e2e2e;"></div><div style="position:absolute;left:866px;top:181px;width:1px;height:804px;background:#272727;"></div><div style="position:absolute;left:867px;top:165px;width:1053px;height:38.5px;background:#474747;"></div><div style="position:absolute;left:1901px;top:181px;width:1px;height:804px;background:#3c3c3c;"></div><div style="position:absolute;left:1902px;top:278px;width:18px;height:160px;background:#4f4f4f;"></div><div style="position:absolute;left:1902px;top:274px;width:18px;height:2px;background:#a8a8a8;"></div><div style="position:absolute;left:1902px;top:181px;width:18px;height:22.5px;background:#4d4d4d;"></div><div style="position:absolute;left:889px;top:181px;width:1px;height:103px;background:#7b9fb5;"></div><div style="position:absolute;left:889px;top:284px;width:1px;height:79px;background:#4b4b4b;"></div><div style="position:absolute;left:889px;top:363px;width:1px;height:41px;background:#7b9fb5;"></div><div style="position:absolute;left:910.5px;top:243px;width:1px;height:120px;background:#4b4b4b;"></div><div style="position:absolute;left:888.5px;top:523px;width:1px;height:120px;background:#4b4b4b;"></div><div style="position:absolute;left:910.5px;top:563px;width:1px;height:40px;background:#4b4b4b;"></div><div style="position:absolute;left:888.5px;top:723px;width:1px;height:80px;background:#4b4b4b;"></div><div style="position:absolute;left:888.5px;top:843px;width:1px;height:80px;background:#4b4b4b;"></div><div style="position:absolute;left:812.00px;top:170.21px;height:30px;line-height:30px;font-size:18.33px;color:#c8c8c8;font-family:'Liberation Mono',monospace;white-space:pre;-webkit-text-stroke:0.3px;">11</div><div style="position:absolute;left:910.00px;top:170.21px;height:30px;line-height:30px;font-size:18.33px;color:#f0f0f0;font-family:'Liberation Mono',monospace;white-space:pre;-webkit-text-stroke:0.3px;"><span style="color:#ffd700">]</span><span style="color:#86d6f7">,</span></div><div style="position:absolute;left:812.00px;top:210.21px;height:30px;line-height:30px;font-size:18.33px;color:#646464;font-family:'Liberation Mono',monospace;white-space:pre;-webkit-text-stroke:0.3px;">12</div><svg style="position:absolute;left:843px;top:209px;" width="14" height="10" viewBox="0 0 14 10"><path d="M1.500 2.500l5.500 5.500 5.500-5.500" fill="none" stroke="#c8c8c8" stroke-width="1.400"/></svg><div style="position:absolute;left:910.00px;top:210.21px;height:30px;line-height:30px;font-size:18.33px;color:#f0f0f0;font-family:'Liberation Mono',monospace;white-space:pre;-webkit-text-stroke:0.3px;"><span style="color:#f0f0f0">colorList1</span><span style="color:#86d6f7">:</span><span style="color:#f0f0f0"> </span><span style="color:#ffd700">[</span></div><div style="position:absolute;left:812.00px;top:250.21px;height:30px;line-height:30px;font-size:18.33px;color:#646464;font-family:'Liberation Mono',monospace;white-space:pre;-webkit-text-stroke:0.3px;">13</div><div style="position:absolute;left:932.00px;top:250.21px;height:30px;line-height:30px;font-size:18.33px;color:#f0f0f0;font-family:'Liberation Mono',monospace;white-space:pre;-webkit-text-stroke:0.3px;"><span style="color:#e06fdc">{</span><span style="color:#f0f0f0">color</span><span style="color:#86d6f7">:</span><span style="color:#f0f0f0"> </span><span style="color:#86d6f7">&#x27;</span><span style="color:#f4705f">67,10,90</span><span style="color:#86d6f7">&#x27;</span><span style="color:#e06fdc">}</span><span style="color:#86d6f7">,</span><span style="color:#e06fdc">{</span><span style="color:#f0f0f0">color</span><span style="color:#86d6f7">:</span><span style="color:#f0f0f0"> </span><span style="color:#86d6f7">&#x27;</span><span style="color:#f4705f">238,224,97</span><span style="color:#86d6f7">&#x27;</span><span style="color:#e06fdc">}</span><span style="color:#86d6f7">,</span><span style="color:#e06fdc">{</span><span style="color:#f0f0f0">color</span><span style="color:#86d6f7">:</span><span style="color:#f0f0f0"> </span><span style="color:#86d6f7">&#x27;</span><span style="color:#f4705f">212,54,127</span><span style="color:#86d6f7">&#x27;</span><span style="color:#e06fdc">}</span><span style="color:#86d6f7">,</span><span style="color:#e06fdc">{</span><span style="color:#f0f0f0">color</span><span style="color:#86d6f7">:</span><span style="color:#f0f0f0"> </span><span style="color:#86d6f7">&#x27;</span><span style="color:#f4705f">247,146,102</span><span style="color:#86d6f7">&#x27;</span><span style="color:#e06fdc">}</span><span style="color:#86d6f7">,</span></div><div style="position:absolute;left:932.00px;top:290.21px;height:30px;line-height:30px;font-size:18.33px;color:#f0f0f0;font-family:'Liberation Mono',monospace;white-space:pre;-webkit-text-stroke:0.3px;"><span style="color:#e06fdc">{</span><span style="color:#f0f0f0">color</span><span style="color:#86d6f7">:</span><span style="color:#f0f0f0"> </span><span style="color:#86d6f7">&#x27;</span><span style="color:#f4705f">65,152,198</span><span style="color:#86d6f7">&#x27;</span><span style="color:#e06fdc">}</span><span style="color:#86d6f7">,</span><span style="color:#e06fdc">{</span><span style="color:#f0f0f0">color</span><span style="color:#86d6f7">:</span><span style="color:#f0f0f0"> </span><span style="color:#86d6f7">&#x27;</span><span style="color:#f4705f">223,155,81</span><span style="color:#86d6f7">&#x27;</span><span style="color:#e06fdc">}</span><span style="color:#86d6f7">,</span><span style="color:#e06fdc">{</span><span style="color:#f0f0f0">color</span><span style="color:#86d6f7">:</span><span style="color:#f0f0f0"> </span><span style="color:#86d6f7">&#x27;</span><span style="color:#f4705f">25,0,224</span><span style="color:#86d6f7">&#x27;</span><span style="color:#e06fdc">}</span><span style="color:#86d6f7">,</span><span style="color:#e06fdc">{</span><span style="color:#f0f0f0">color</span><span style="color:#86d6f7">:</span><span style="color:#f0f0f0"> </span><span style="color:#86d6f7">&#x27;</span><span style="color:#f4705f">52,47,132</span><span style="color:#86d6f7">&#x27;</span><span style="color:#e06fdc">}</span><span style="color:#86d6f7">,</span></div><div style="position:absolute;left:932.00px;top:330.21px;height:30px;line-height:30px;font-size:18.33px;color:#f0f0f0;font-family:'Liberation Mono',monospace;white-space:pre;-webkit-text-stroke:0.3px;"><span style="color:#e06fdc">{</span><span style="color:#f0f0f0">color</span><span style="color:#86d6f7">:</span><span style="color:#f0f0f0"> </span><span style="color:#86d6f7">&#x27;</span><span style="color:#f4705f">135,123,163</span><span style="color:#86d6f7">&#x27;</span><span style="color:#e06fdc">}</span><span style="color:#86d6f7">,</span><span style="color:#e06fdc">{</span><span style="color:#f0f0f0">color</span><span style="color:#86d6f7">:</span><span style="color:#f0f0f0"> </span><span style="color:#86d6f7">&#x27;</span><span style="color:#f4705f">241,12,182</span><span style="color:#86d6f7">&#x27;</span><span style="color:#e06fdc">}</span></div><div style="position:absolute;left:812.00px;top:370.21px;height:30px;line-height:30px;font-size:18.33px;color:#646464;font-family:'Liberation Mono',monospace;white-space:pre;-webkit-text-stroke:0.3px;">14</div><div style="position:absolute;left:910.00px;top:370.21px;height:30px;line-height:30px;font-size:18.33px;color:#f0f0f0;font-family:'Liberation Mono',monospace;white-space:pre;-webkit-text-stroke:0.3px;"><span style="color:#ffd700">]</span></div><div style="position:absolute;left:889px;top:404px;width:10px;height:40px;border:1px solid #8c8c8c;background:#2a3529"></div><div style="position:absolute;left:812.00px;top:410.21px;height:30px;line-height:30px;font-size:18.33px;color:#646464;font-family:'Liberation Mono',monospace;white-space:pre;-webkit-text-stroke:0.3px;">15</div><div style="position:absolute;left:888.00px;top:410.21px;height:30px;line-height:30px;font-size:18.33px;color:#f0f0f0;font-family:'Liberation Mono',monospace;white-space:pre;-webkit-text-stroke:0.3px;"><span style="color:#66b6f5">}</span><span style="color:#86d6f7">,</span></div><div style="position:absolute;left:812.00px;top:450.21px;height:30px;line-height:30px;font-size:18.33px;color:#646464;font-family:'Liberation Mono',monospace;white-space:pre;-webkit-text-stroke:0.3px;">16</div><div style="position:absolute;left:888.00px;top:450.21px;height:30px;line-height:30px;font-size:18.33px;color:#f0f0f0;font-family:'Liberation Mono',monospace;white-space:pre;-webkit-text-stroke:0.3px;"><span style="color:#6cc76c">// </span><span class="cm" style="color:#6cc76c">上拉刷新后，重新为</span><span style="color:#6cc76c">colorList</span><span class="cm" style="color:#6cc76c">数组添加新值</span></div><div style="position:absolute;left:812.00px;top:490.21px;height:30px;line-height:30px;font-size:18.33px;color:#646464;font-family:'Liberation Mono',monospace;white-space:pre;-webkit-text-stroke:0.3px;">17</div><svg style="position:absolute;left:843px;top:489px;" width="14" height="10" viewBox="0 0 14 10"><path d="M1.500 2.500l5.500 5.500 5.500-5.500" fill="none" stroke="#c8c8c8" stroke-width="1.400"/></svg><div style="position:absolute;left:888.00px;top:490.21px;height:30px;line-height:30px;font-size:18.33px;color:#f0f0f0;font-family:'Liberation Mono',monospace;white-space:pre;-webkit-text-stroke:0.3px;"><span style="color:#fba347">getArray</span><span style="color:#66b6f5">()</span><span style="color:#f0f0f0"> </span><span style="color:#66b6f5">{</span></div><div style="position:absolute;left:812.00px;top:530.21px;height:30px;line-height:30px;font-size:18.33px;color:#646464;font-family:'Liberation Mono',monospace;white-space:pre;-webkit-text-stroke:0.3px;">18</div><svg style="position:absolute;left:843px;top:529px;" width="14" height="10" viewBox="0 0 14 10"><path d="M1.500 2.500l5.500 5.500 5.500-5.500" fill="none" stroke="#c8c8c8" stroke-width="1.400"/></svg><div style="position:absolute;left:910.00px;top:530.21px;height:30px;line-height:30px;font-size:18.33px;color:#f0f0f0;font-family:'Liberation Mono',monospace;white-space:pre;-webkit-text-stroke:0.3px;"><span style="color:#55bcfa">this</span><span style="color:#86d6f7">.</span><span style="color:#fba347">setData</span><span style="color:#ffd700">(</span><span style="color:#e06fdc">{</span></div><div style="position:absolute;left:812.00px;top:570.21px;height:30px;line-height:30px;font-size:18.33px;color:#646464;font-family:'Liberation Mono',monospace;white-space:pre;-webkit-text-stroke:0.3px;">19</div><div style="position:absolute;left:932.00px;top:570.21px;height:30px;line-height:30px;font-size:18.33px;color:#f0f0f0;font-family:'Liberation Mono',monospace;white-space:pre;-webkit-text-stroke:0.3px;"><span style="color:#f0f0f0">colorList</span><span style="color:#86d6f7">:</span><span style="color:#f0f0f0"> </span><span style="color:#66b6f5">[</span><span style="color:#d2d2d2">...</span><span style="color:#55bcfa">this</span><span style="color:#86d6f7">.</span><span style="color:#d2d2d2">data</span><span style="color:#86d6f7">.</span><span style="color:#d2d2d2">colorList</span><span style="color:#86d6f7">,</span><span style="color:#f0f0f0"> </span><span style="color:#ffd700">...</span><span style="color:#55bcfa">this</span><span style="color:#86d6f7">.</span><span style="color:#d2d2d2">data</span><span style="color:#86d6f7">.</span><span style="color:#d2d2d2">colorList1</span><span style="color:#66b6f5">]</span></div><div style="position:absolute;left:812.00px;top:610.21px;height:30px;line-height:30px;font-size:18.33px;color:#646464;font-family:'Liberation Mono',monospace;white-space:pre;-webkit-text-stroke:0.3px;">20</div><div style="position:absolute;left:910.00px;top:610.21px;height:30px;line-height:30px;font-size:18.33px;color:#f0f0f0;font-family:'Liberation Mono',monospace;white-space:pre;-webkit-text-stroke:0.3px;"><span style="color:#e06fdc">}</span><span style="color:#ffd700">)</span></div><div style="position:absolute;left:812.00px;top:650.21px;height:30px;line-height:30px;font-size:18.33px;color:#646464;font-family:'Liberation Mono',monospace;white-space:pre;-webkit-text-stroke:0.3px;">21</div><div style="position:absolute;left:888.00px;top:650.21px;height:30px;line-height:30px;font-size:18.33px;color:#f0f0f0;font-family:'Liberation Mono',monospace;white-space:pre;-webkit-text-stroke:0.3px;"><span style="color:#66b6f5">}</span><span style="color:#86d6f7">,</span></div><div style="position:absolute;left:812.00px;top:690.21px;height:30px;line-height:30px;font-size:18.33px;color:#646464;font-family:'Liberation Mono',monospace;white-space:pre;-webkit-text-stroke:0.3px;">22</div><svg style="position:absolute;left:843px;top:689px;" width="14" height="10" viewBox="0 0 14 10"><path d="M1.500 2.500l5.500 5.500 5.500-5.500" fill="none" stroke="#c8c8c8" stroke-width="1.400"/></svg><div style="position:absolute;left:888.00px;top:690.21px;height:30px;line-height:30px;font-size:18.33px;color:#f0f0f0;font-family:'Liberation Mono',monospace;white-space:pre;-webkit-text-stroke:0.3px;"><span style="color:#6cc76c">/**</span></div><div style="position:absolute;left:812.00px;top:730.21px;height:30px;line-height:30px;font-size:18.33px;color:#646464;font-family:'Liberation Mono',monospace;white-space:pre;-webkit-text-stroke:0.3px;">23</div><div style="position:absolute;left:899.00px;top:730.21px;height:30px;line-height:30px;font-size:18.33px;color:#f0f0f0;font-family:'Liberation Mono',monospace;white-space:pre;-webkit-text-stroke:0.3px;"><span style="color:#6cc76c">* </span><span class="cm" style="color:#6cc76c">页面上拉触底事件的处理函数</span></div><div style="position:absolute;left:812.00px;top:770.21px;height:30px;line-height:30px;font-size:18.33px;color:#646464;font-family:'Liberation Mono',monospace;white-space:pre;-webkit-text-stroke:0.3px;">24</div><div style="position:absolute;left:899.00px;top:770.21px;height:30px;line-height:30px;font-size:18.33px;color:#f0f0f0;font-family:'Liberation Mono',monospace;white-space:pre;-webkit-text-stroke:0.3px;"><span style="color:#6cc76c">*/</span></div><div style="position:absolute;left:812.00px;top:810.21px;height:30px;line-height:30px;font-size:18.33px;color:#646464;font-family:'Liberation Mono',monospace;white-space:pre;-webkit-text-stroke:0.3px;">25</div><svg style="position:absolute;left:843px;top:809px;" width="14" height="10" viewBox="0 0 14 10"><path d="M1.500 2.500l5.500 5.500 5.500-5.500" fill="none" stroke="#c8c8c8" stroke-width="1.400"/></svg><div style="position:absolute;left:888.00px;top:810.21px;height:30px;line-height:30px;font-size:18.33px;color:#f0f0f0;font-family:'Liberation Mono',monospace;white-space:pre;-webkit-text-stroke:0.3px;"><span style="color:#fba347">onReachBottom</span><span style="color:#66b6f5">()</span><span style="color:#f0f0f0"> </span><span style="color:#66b6f5">{</span></div><div style="position:absolute;left:812.00px;top:850.21px;height:30px;line-height:30px;font-size:18.33px;color:#646464;font-family:'Liberation Mono',monospace;white-space:pre;-webkit-text-stroke:0.3px;">26</div><div style="position:absolute;left:910.00px;top:850.21px;height:30px;line-height:30px;font-size:18.33px;color:#f0f0f0;font-family:'Liberation Mono',monospace;white-space:pre;-webkit-text-stroke:0.3px;"><span style="color:#d2d2d2">console</span><span style="color:#86d6f7">.</span><span style="color:#fba347">log</span><span style="color:#ffd700">(</span><span style="color:#86d6f7">&#x27;</span><span class="cm" style="color:#f4705f">已触发</span><span style="color:#86d6f7">&#x27;</span><span style="color:#ffd700">)</span></div><div style="position:absolute;left:812.00px;top:890.21px;height:30px;line-height:30px;font-size:18.33px;color:#646464;font-family:'Liberation Mono',monospace;white-space:pre;-webkit-text-stroke:0.3px;">27</div><div style="position:absolute;left:910.00px;top:890.21px;height:30px;line-height:30px;font-size:18.33px;color:#f0f0f0;font-family:'Liberation Mono',monospace;white-space:pre;-webkit-text-stroke:0.3px;"><span style="color:#55bcfa">this</span><span style="color:#86d6f7">.</span><span style="color:#fba347">getArray</span><span style="color:#ffd700">()</span></div><div style="position:absolute;left:812.00px;top:930.21px;height:30px;line-height:30px;font-size:18.33px;color:#646464;font-family:'Liberation Mono',monospace;white-space:pre;-webkit-text-stroke:0.3px;">28</div><div style="position:absolute;left:888.00px;top:930.21px;height:30px;line-height:30px;font-size:18.33px;color:#f0f0f0;font-family:'Liberation Mono',monospace;white-space:pre;-webkit-text-stroke:0.3px;"><span style="color:#66b6f5">}</span><span style="color:#86d6f7">,</span></div><div style="position:absolute;left:812.00px;top:970.21px;height:30px;line-height:30px;font-size:18.33px;color:#646464;font-family:'Liberation Mono',monospace;white-space:pre;-webkit-text-stroke:0.3px;">29</div><div style="position:absolute;left:761px;top:153px;width:1159px;height:27px;background:#2e2e2e;box-shadow:0 2px 4px rgba(0,0,0,.5)"></div><svg style="position:absolute;left:771px;top:158px;" width="20" height="18" viewBox="0 0 20 18"><g stroke="#a6a6a6" fill="none" stroke-width="1.500"><path d="M6 3.500h13M6 7.500h13M6 11.500h13M6 15.500h13"/><path d="M1.500 3.500h2M1.500 7.500h2M1.500 11.500h2M1.500 15.500h2"/></g></svg><svg style="position:absolute;left:809px;top:157px;" width="16" height="20" viewBox="0 0 16 20"><path d="M2.500 1.500h11v16.500l-5.500-6-5.500 6z" stroke="#a6a6a6" fill="none" stroke-width="1.500" stroke-width="1.700"/></svg><svg style="position:absolute;left:845px;top:159px;" width="18" height="16" viewBox="0 0 18 16"><path d="M16.500 8h-14M8.500 2l-6 6 6 6" stroke="#a6a6a6" fill="none" stroke-width="1.500"/></svg><svg style="position:absolute;left:881px;top:159px;" width="18" height="16" viewBox="0 0 18 16"><path d="M1.500 8h14M9.500 2l6 6-6 6" stroke="#5a5a5a" fill="none" stroke-width="1.500"/></svg><div style="position:absolute;left:919.00px;top:156.75px;height:23px;line-height:23px;font-size:16.30px;color:#a3a3a3;font-family:'Liberation Sans',sans-serif;white-space:pre;letter-spacing:0.129px;">miniprogram</div><div style="position:absolute;left:1032.00px;top:156.75px;height:23px;line-height:23px;font-size:16.30px;color:#a3a3a3;font-family:'Liberation Sans',sans-serif;white-space:pre;letter-spacing:-0.482px;">pages</div><div style="position:absolute;left:1095.00px;top:156.75px;height:23px;line-height:23px;font-size:16.30px;color:#a3a3a3;font-family:'Liberation Sans',sans-serif;white-space:pre;letter-spacing:-0.079px;">contact</div><div style="position:absolute;left:1195.00px;top:156.75px;height:23px;line-height:23px;font-size:16.30px;color:#a3a3a3;font-family:'Liberation Sans',sans-serif;white-space:pre;letter-spacing:-0.076px;">contact.ts</div><div style="position:absolute;left:1311.00px;top:156.75px;height:23px;line-height:23px;font-size:16.30px;color:#a3a3a3;font-family:'Liberation Sans',sans-serif;white-space:pre;letter-spacing:0.069px;">data</div><svg style="position:absolute;left:1019px;top:160.5px;" width="10" height="14" viewBox="0 0 10 14"><path d="M2 1.500l5.500 5.500-5.500 5.500" stroke="#a3a3a3" fill="none" stroke-width="1.400"/></svg><svg style="position:absolute;left:1080px;top:160.5px;" width="10" height="14" viewBox="0 0 10 14"><path d="M2 1.500l5.500 5.500-5.500 5.500" stroke="#a3a3a3" fill="none" stroke-width="1.400"/></svg><svg style="position:absolute;left:1153px;top:160.5px;" width="10" height="14" viewBox="0 0 10 14"><path d="M2 1.500l5.500 5.500-5.500 5.500" stroke="#a3a3a3" fill="none" stroke-width="1.400"/></svg><svg style="position:absolute;left:1270px;top:160.5px;" width="10" height="14" viewBox="0 0 10 14"><path d="M2 1.500l5.500 5.500-5.500 5.500" stroke="#a3a3a3" fill="none" stroke-width="1.400"/></svg><svg style="position:absolute;left:1170px;top:159px;" width="17" height="17" viewBox="0 0 16 16"><rect x="0" y="0" width="16" height="16" fill="#0288d1"/><path d="M5.200 8.300h5v1.300h-1.800v5.200h-1.400v-5.200h-1.800z" fill="#0a4d78"/><path d="M14.600 9.700q-.700-.500-1.500-.500t-.8.500q0 .400 1.100.900q1.600.700 1.600 2.100q0 2-2.300 2q-1.200 0-2-.600v-1.400q.9.700 1.900.700q.9 0 .9-.600q0-.500-1.200-1q-1.500-.700-1.500-2q0-1.800 2.200-1.800q1 0 1.600.300z" fill="#0a4d78"/></svg><svg style="position:absolute;left:1284px;top:156.5px;" width="21" height="21" viewBox="0 0 18 18"><path d="M15.800 3.200a4.200 4.200 0 0 0-5.600 4.600l-7.600 6.700 1.800 1.900 7-7.300a4.200 4.200 0 0 0 5.300-4.700l-2.500 2.400-2-.600-.500-1.900z" fill="none" stroke="#a3a3a3" stroke-width="1.200"/></svg><div style="position:absolute;left:0px;top:985px;width:1920px;height:35px;background:#363636;"></div><div style="position:absolute;left:510px;top:985px;width:1px;height:35px;background:#262626;"></div><div style="position:absolute;left:10.00px;top:995.40px;height:15.00px;line-height:0;font-size:0;white-space:nowrap"><span class="cj" style="font-size:15px;line-height:15px;color:#aeaeae">页面参数</span></div><svg style="position:absolute;left:75px;top:1000px;" width="9" height="7" viewBox="0 0 9 7"><path d="M.500 1h8l-4 5z" fill="#aeaeae"/></svg><div style="position:absolute;left:94px;top:995px;width:1px;height:15px;background:#5a5a5a;"></div><div style="position:absolute;left:104.00px;top:994.38px;height:20px;line-height:20px;font-size:14.50px;color:#aeaeae;font-family:'Liberation Sans',sans-serif;white-space:pre;">(<span class="ci">空</span>)</div><svg style="position:absolute;left:395.8px;top:989.5px;" width="26.5" height="26.5" viewBox="0 0 22 22"><g stroke="#a8a8a8" fill="none" stroke-width="1.300" stroke-width="1.100"><ellipse cx="11" cy="12" rx="4.200" ry="5.800"/><path d="M11 6.300v11.500M8 6.200a3 3 0 0 1 6 0M6.800 9.800l-3.500-1.700M6.800 12.500h-4M6.900 15.200l-3.400 2M15.200 9.800l3.500-1.700M15.200 12.500h4M15.100 15.200l3.400 2"/></g></svg><svg style="position:absolute;left:439px;top:994px;" width="22" height="18" viewBox="0 0 22 18"><g stroke="#a8a8a8" fill="none" stroke-width="1.300"><path d="M1.500 9q9.500-9.500 19 0q-9.500 9.500-19 0z"/><circle cx="11" cy="9" r="3"/></g></svg><svg style="position:absolute;left:480px;top:998px;" width="20" height="10" viewBox="0 0 20 10"><g fill="#b0b0b0"><circle cx="3.500" cy="5" r="1.300"/><circle cx="10" cy="5" r="1.300"/><circle cx="16.500" cy="5" r="1.300"/></g></svg><svg style="position:absolute;left:529px;top:994px;" width="20" height="18" viewBox="0 0 20 18"><g stroke="#a2a2a2" fill="none" stroke-width="1.200"><circle cx="9.500" cy="9" r="7.300"/><path d="M6.500 6l6 6M12.500 6l-6 6"/></g></svg><div style="position:absolute;left:551.50px;top:993.77px;height:21px;line-height:21px;font-size:14.80px;color:#a2a2a2;font-family:'Liberation Sans',sans-serif;white-space:pre;">0</div><svg style="position:absolute;left:565px;top:994px;" width="18" height="18" viewBox="0 0 18 18"><g stroke="#a2a2a2" fill="none" stroke-width="1.200"><path d="M9 2.500l7 13h-14z"/><path d="M9 7v4.500M9 13v1.300"/></g></svg><div style="position:absolute;left:585.50px;top:993.77px;height:21px;line-height:21px;font-size:14.80px;color:#a2a2a2;font-family:'Liberation Sans',sans-serif;white-space:pre;">0</div><div style="position:absolute;left:1531.50px;top:993.77px;height:21px;line-height:21px;font-size:14.80px;color:#a2a2a2;font-family:'Liberation Sans',sans-serif;white-space:pre;letter-spacing:0.200px;"><span class="ci">行</span> 11<span class="ci">，列</span> 7</div><div style="position:absolute;left:1629.00px;top:993.77px;height:21px;line-height:21px;font-size:14.80px;color:#a2a2a2;font-family:'Liberation Sans',sans-serif;white-space:pre;"><span class="ci" style="font-size:14.5px">空格</span>: 2</div><div style="position:absolute;left:1695.00px;top:993.77px;height:21px;line-height:21px;font-size:14.80px;color:#a2a2a2;font-family:'Liberation Sans',sans-serif;white-space:pre;letter-spacing:-0.386px;">UTF-8</div><div style="position:absolute;left:1755.00px;top:993.77px;height:21px;line-height:21px;font-size:14.80px;color:#a2a2a2;font-family:'Liberation Sans',sans-serif;white-space:pre;letter-spacing:-1.636px;">LF</div><div style="position:absolute;left:1789.00px;top:993.77px;height:21px;line-height:21px;font-size:14.80px;color:#a2a2a2;font-family:'Liberation Sans',sans-serif;white-space:pre;letter-spacing:-0.092px;">TypeScript</div><div style="position:absolute;left:1877.00px;top:993.77px;height:21px;line-height:21px;font-size:14.80px;color:#a2a2a2;font-family:'Liberation Sans',sans-serif;white-space:pre;letter-spacing:-0.183px;">4.1.2</div><div style="position:absolute;left:0px;top:1020px;width:1920px;height:60px;background:#dce0eb;border-top:1px solid #c3c6ce;"></div><svg style="position:absolute;left:24px;top:1040px;" width="30" height="20" viewBox="0 0 30 20"><defs><linearGradient id="cld" x1="0" y1="0" x2="0" y2="1"><stop offset="0" stop-color="#d3dde6"/><stop offset=".55" stop-color="#b4c3cf"/><stop offset="1" stop-color="#8ea2b2"/></linearGradient></defs><path d="M6.500 17.500q-5 0-5-4.300t4.600-4.500q1.200-5.200 7.200-5.200q4.600 0 6.400 3.600q7.800-.900 7.800 5.400q0 5-5.500 5z" fill="url(#cld)"/></svg><div style="position:absolute;left:63.00px;top:1030.65px;height:20px;line-height:20px;font-size:14.30px;color:#1c1c1c;font-family:'Liberation Sans',sans-serif;white-space:pre;letter-spacing:-0.333px;">5°C</div><div style="position:absolute;left:62.50px;top:1052.24px;height:14.50px;line-height:0;font-size:0;white-space:nowrap"><span class="cj" style="font-size:14.5px;line-height:14.5px;color:#3a3a3a">雾</span></div><div style="position:absolute;left:687px;top:1036px;width:14px;height:14px;background:linear-gradient(135deg,#4cc2f3,#0a7bd6);border-radius:1.500px;"></div><div style="position:absolute;left:702px;top:1036px;width:14px;height:14px;background:linear-gradient(135deg,#4cc2f3,#0a7bd6);border-radius:1.500px;"></div><div style="position:absolute;left:687px;top:1051px;width:14px;height:14px;background:linear-gradient(135deg,#4cc2f3,#0a7bd6);border-radius:1.500px;"></div><div style="position:absolute;left:702px;top:1051px;width:14px;height:14px;background:linear-gradient(135deg,#4cc2f3,#0a7bd6);border-radius:1.500px;"></div><div style="position:absolute;left:734px;top:1031px;width:123px;height:37px;background:#f7f8fc;border-radius:18.500px;box-shadow:0 0 1px rgba(0,0,0,.25);"></div><svg style="position:absolute;left:768px;top:1039px;" width="22" height="22" viewBox="0 0 22 22"><g stroke="#1a1a1a" fill="none" stroke-width="1.800"><circle cx="9" cy="9" r="6.300"/><path d="M13.700 13.700l5.300 5.300"/></g></svg><div style="position:absolute;left:793.00px;top:1042.12px;height:16.00px;line-height:0;font-size:0;white-space:nowrap"><span class="cj" style="font-size:16px;line-height:16px;color:#1f1f1f">搜索</span></div><div style="position:absolute;left:875px;top:1044px;width:22px;height:19px;background:#2b2b2b;border-radius:2.500px;"></div><div style="position:absolute;left:883px;top:1036px;width:22px;height:19px;background:linear-gradient(135deg,#ffffff,#d9d9d9);border-radius:2.500px;box-shadow:0 0 2px rgba(0,0,0,.35);opacity:.93;"></div><svg style="position:absolute;left:929px;top:1035px;" width="32" height="30" viewBox="0 0 32 30"><path d="M1.500 5q0-2 2-2h7.500l3 3h15q1.500 0 1.500 1.500v3h-29z" fill="#e3a51c"/><path d="M1.500 9.500q0-1.500 1.500-1.500h26.500q1.500 0 1.500 1.500v15.500q0 2-2 2h-25.500q-2 0-2-2z" fill="#fcd252"/><path d="M1.500 22h29v3q0 2-2 2h-25q-2 0-2-2z" fill="#f1b92c"/><rect x="9" y="19.500" width="14" height="7.500" rx="1" fill="#1a7fd6"/><rect x="11.500" y="22" width="9" height="2" fill="#0b5aa8"/></svg><svg style="position:absolute;left:984px;top:1033.5px;" width="32" height="32" viewBox="0 0 32 32"><defs><linearGradient id="eg1" x1="0.100" y1="0.900" x2="0.900" y2="0.100"><stop offset="0" stop-color="#0c4f9e"/><stop offset=".45" stop-color="#1b8fe0"/><stop offset=".75" stop-color="#35c1b0"/><stop offset="1" stop-color="#6fe05a"/></linearGradient><linearGradient id="eg2" x1="0" y1="0" x2="1" y2="1"><stop offset="0" stop-color="#1a7fd4"/><stop offset="1" stop-color="#0b3f86"/></linearGradient></defs><path d="M16 1.500C25 1.500 30.500 8 30.500 14C30.500 18.500 27 21 23.500 21C21 21 19.500 20 19.500 18.500C19.500 17.500 20.500 17 20.500 15.500C20.500 13 18.500 11 15.500 11C11.500 11 8 14.500 8 19.500C8 25.500 13 30.500 20 30.500C18 31 17 31 16 31C8 31 1.500 24.500 1.500 16C1.500 8 8 1.500 16 1.500z" fill="url(#eg1)"/><path d="M8 19.500C8 25.500 13 30.500 19.500 30.500C24 30.500 27.500 28 29 25C26.500 27 23 27.300 20.500 26.200C17 24.700 15 21.500 15.500 18C14 14.500 8.500 15 8 19.500z" fill="url(#eg2)"/></svg><div style="position:absolute;left:1040px;top:1035px;width:30px;height:30px;background:#e60f23;"></div><svg style="position:absolute;left:1040px;top:1035px;" width="30" height="30" viewBox="0 0 30 30"><circle cx="15" cy="15.500" r="8.300" fill="none" stroke="#fff" stroke-width="2.200"/><path d="M10.500 20.500v-7l4.500-3.500 4.500 3.500v7l-4.500-3.300z" fill="#fff"/></svg><svg style="position:absolute;left:1094px;top:1034px;" width="32" height="32" viewBox="0 0 32 32"><path d="M2 8l9-6 9 4-3 20-13-4z" fill="#fc3a6e"/><path d="M14 4l14 5-2 14-12 7z" fill="#2b7cf0"/><path d="M22 6l8 8-6 12-8-4z" fill="#a24bd8"/><path d="M3 20l8-6 6 14-9 2z" fill="#f98a2a"/><rect x="6" y="6" width="20.500" height="20.500" fill="#000"/><rect x="8.500" y="22" width="8" height="1.700" fill="#fff"/></svg><div style="position:absolute;left:1102.50px;top:1039.92px;height:16px;line-height:16px;font-size:11.50px;color:#ffffff;font-family:'Liberation Sans',sans-serif;white-space:pre;font-weight:bold;">IJ</div><svg style="position:absolute;left:1147px;top:1035px;" width="34" height="30" viewBox="0 0 34 30"><ellipse cx="13" cy="11.500" rx="11.500" ry="9.800" fill="#2dc100"/><path d="M5 18l-1.500 5 6-3z" fill="#2dc100"/><circle cx="9" cy="8.500" r="1.400" fill="#1a8a00"/><circle cx="17" cy="8.500" r="1.400" fill="#1a8a00"/><ellipse cx="24" cy="20" rx="9" ry="7.500" fill="#dcdcdc"/><path d="M29.500 25l1.800 3.500-5-2z" fill="#dcdcdc"/><circle cx="21" cy="18" r="1.200" fill="#8a8a8a"/><circle cx="27" cy="18" r="1.200" fill="#8a8a8a"/></svg><div style="position:absolute;left:1196px;top:1026px;width:48px;height:47px;background:#f0f2f8;border-radius:5px;box-shadow:0 0 1px rgba(0,0,0,.2);"></div><svg style="position:absolute;left:1204px;top:1035px;" width="34" height="30" viewBox="0 0 34 30"><ellipse cx="16" cy="13" rx="13.500" ry="11.500" fill="#e9ebe9"/><path d="M7 20l-2 6 7-3.500z" fill="#e9ebe9"/><path d="M11 8.500l4 3-4 3" stroke="#16b65a" stroke-width="1.700" fill="none"/><rect x="17" y="14" width="5" height="1.700" fill="#16b65a"/><circle cx="24.500" cy="10" r="1.300" fill="#16b65a"/></svg><div style="position:absolute;left:1210px;top:1070.5px;width:21px;height:3.5px;background:#e8112a;border-radius:2px;"></div><div style="position:absolute;left:996px;top:1070.5px;width:8px;height:3px;background:#8a8d94;border-radius:1.500px;"></div><div style="position:absolute;left:1106px;top:1070.5px;width:8px;height:3px;background:#8a8d94;border-radius:1.500px;"></div><div style="position:absolute;left:1161px;top:1070.5px;width:8px;height:3px;background:#8a8d94;border-radius:1.500px;"></div><svg style="position:absolute;left:1650px;top:1041px;" width="20" height="14" viewBox="0 0 20 14"><path d="M2.500 11l7.500-7.500 7.500 7.500" stroke="#1a1a1a" stroke-width="1.600" fill="none"/></svg><div style="position:absolute;left:1685.00px;top:1040.66px;height:18.00px;line-height:0;font-size:0;white-space:nowrap"><span class="cj" style="font-size:18px;line-height:18px;color:#1a1a1a">英</span></div><svg style="position:absolute;left:1723px;top:1038px;" width="24" height="20" viewBox="0 0 24 20"><g stroke="#1a1a1a" fill="none" stroke-width="1.500"><path d="M2 8.500q10-9 20 0M5.300 11.800q6.700-6 13.400 0M8.600 15q3.400-3 6.800 0"/></g><circle cx="12" cy="17.200" r="1.400" fill="#1a1a1a"/></svg><svg style="position:absolute;left:1754px;top:1040px;" width="26" height="18" viewBox="0 0 26 18"><g stroke="#1a1a1a" fill="none" stroke-width="1.400"><path d="M2.500 6.500h3.500l4.500-4v13l-4.500-4h-3.500z"/><path d="M15.500 6l5.500 5.500M21 6l-5.500 5.500"/></g></svg><svg style="position:absolute;left:1783px;top:1038px;" width="26" height="22" viewBox="0 0 26 22"><g stroke="#1a1a1a" fill="none" stroke-width="1.400"><path d="M5 6.500h14.500v8h-6.500M5 6.500l-2.300 8h7"/><path d="M19.500 9h1.500v3h-1.500"/><path d="M6.500 3.500l2 2.500M9.800 2.500l.5 3"/></g><path d="M17 20.500l-3.200-3.100a2 2 0 0 1 3.200-2.400a2 2 0 0 1 3.200 2.400z" fill="#1a1a1a"/></svg><div style="position:absolute;left:1860.00px;top:1030.54px;height:20px;line-height:20px;font-size:14.60px;color:#1a1a1a;font-family:'Liberation Sans',sans-serif;white-space:pre;letter-spacing:-0.107px;">22:59</div><div style="position:absolute;left:1826.00px;top:1050.54px;height:20px;line-height:20px;font-size:14.60px;color:#1a1a1a;font-family:'Liberation Sans',sans-serif;white-space:pre;letter-spacing:-0.199px;">2022/11/14</div></body></html>
